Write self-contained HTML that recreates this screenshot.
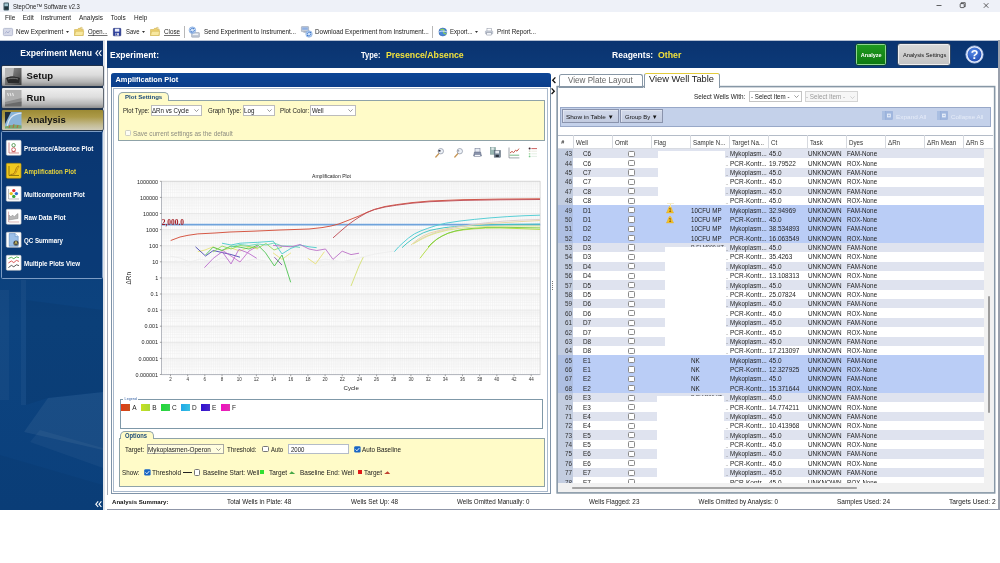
<!DOCTYPE html>
<html><head><meta charset="utf-8"><title>StepOne Software v2.3</title>
<style>
*{box-sizing:border-box;margin:0;padding:0}
html,body{width:1000px;height:563px;overflow:hidden;background:#fff}
body{position:relative;font-family:"Liberation Sans",sans-serif;font-size:6.2px;color:#1a1a1a;line-height:1}
.a,.t{position:absolute;white-space:nowrap}
.t{line-height:1}
svg{position:absolute;overflow:visible}
</style></head><body><div id="app" style="position:absolute;left:0;top:0;width:1000px;height:563px;will-change:transform">
<div class="a" style="left:0px;top:0px;width:1000px;height:11.5px;background:#eef1f8"></div>
<svg style="left:3px;top:1.5px" width="7" height="9" viewBox="0 0 7 9"><rect x="0.5" y="0.5" width="5.5" height="8" rx="1" fill="#3e5a66"/><rect x="1.5" y="1.5" width="3.5" height="2.5" fill="#9fc3cf"/><rect x="1.5" y="5" width="3.5" height="2.5" fill="#22343c"/></svg>
<span class="t" style="left:12.5px;top:4px;font-size:6.9px;transform:scaleX(0.856);transform-origin:0 0;color:#222;">StepOne™ Software v2.3</span>
<svg style="left:930px;top:0" width="70" height="11" viewBox="0 0 70 11"><g stroke="#222" stroke-width="0.7" fill="none"><path d="M6.5 5.5h5"/><rect x="30.2" y="3.6" width="4" height="4" rx="0.8"/><path d="M31.2 3.6v-0.9h4v4h-1"/><path d="M53.8 3.2l4.6 4.6M58.4 3.2l-4.6 4.6"/></g></svg>
<span class="t" style="left:5px;top:15px;font-size:6.45px;">File</span>
<span class="t" style="left:22.7px;top:15px;font-size:6.45px;">Edit</span>
<span class="t" style="left:40.7px;top:15px;font-size:6.45px;">Instrument</span>
<span class="t" style="left:79px;top:15px;font-size:6.45px;">Analysis</span>
<span class="t" style="left:110.7px;top:15px;font-size:6.45px;">Tools</span>
<span class="t" style="left:134px;top:15px;font-size:6.45px;">Help</span>
<span class="t" style="left:16.2px;top:29px;font-size:6.6px;transform:scaleX(0.975);transform-origin:0 0;">New Experiment</span>
<span class="t" style="left:87.5px;top:29px;font-size:6.6px;transform:scaleX(0.901);transform-origin:0 0;text-decoration:underline;text-decoration-thickness:0.5px;text-decoration-color:rgba(0,0,0,0.55);text-underline-offset:0.6px">Open...</span>
<span class="t" style="left:125.5px;top:29px;font-size:6.6px;transform:scaleX(0.897);transform-origin:0 0;">Save</span>
<span class="t" style="left:164px;top:29px;font-size:6.6px;transform:scaleX(0.948);transform-origin:0 0;text-decoration:underline;text-decoration-thickness:0.5px;text-decoration-color:rgba(0,0,0,0.55);text-underline-offset:0.6px">Close</span>
<span class="t" style="left:204px;top:29px;font-size:6.6px;transform:scaleX(0.954);transform-origin:0 0;">Send Experiment to Instrument...</span>
<span class="t" style="left:315px;top:29px;font-size:6.6px;transform:scaleX(0.965);transform-origin:0 0;">Download Experiment from Instrument...</span>
<span class="t" style="left:449.5px;top:29px;font-size:6.6px;transform:scaleX(0.916);transform-origin:0 0;">Export...</span>
<span class="t" style="left:497px;top:29px;font-size:6.6px;transform:scaleX(0.958);transform-origin:0 0;">Print Report...</span>
<svg style="left:65.8px;top:30.6px" width="3" height="2" viewBox="0 0 3 2"><path d="M0 0h3L1.5 2z" fill="#333"/></svg>
<svg style="left:142.2px;top:30.6px" width="3" height="2" viewBox="0 0 3 2"><path d="M0 0h3L1.5 2z" fill="#333"/></svg>
<svg style="left:474.8px;top:30.6px" width="3" height="2" viewBox="0 0 3 2"><path d="M0 0h3L1.5 2z" fill="#333"/></svg>
<div class="a" style="left:183.6px;top:26px;width:0.8px;height:12px;background:#b8b8b8"></div>
<div class="a" style="left:431.6px;top:26px;width:0.8px;height:12px;background:#b8b8b8"></div>
<svg style="left:2.8px;top:28px" width="10" height="8" viewBox="0 0 10 8"><rect x="0.4" y="0.4" width="9.2" height="7.2" rx="1" fill="#d6d9e8" stroke="#a4aac4" stroke-width="0.7"/><path d="M2 5.5l1.5-2 1.5 1.5 2-2.5" stroke="#9aa2c4" stroke-width="0.7" fill="none"/></svg>
<svg style="left:74px;top:26.6px" width="10" height="9" viewBox="0 0 10 9"><path d="M0.5 2.5h3l1-1.2h3v1.2h1.8v6H0.5z" fill="#ecd070" stroke="#c8a840" stroke-width="0.5"/><path d="M0.5 8.5l1.2-4.2h8l-1 4.2z" fill="#f8e8a0" stroke="#c8a840" stroke-width="0.4"/><path d="M6 0.8l2-0.6 0.8 1.6" fill="#f8f0c0" stroke="#c0a040" stroke-width="0.4"/></svg>
<svg style="left:113.4px;top:27.6px" width="8.2" height="8.2" viewBox="0 0 9 9"><rect x="0.4" y="0.4" width="8.2" height="8.2" rx="0.6" fill="#2a3c9c" stroke="#1a2670" stroke-width="0.6"/><rect x="2" y="0.8" width="5" height="3.2" fill="#e8ecf8"/><rect x="2.4" y="5.4" width="4.2" height="3" fill="#c8cce0"/><rect x="3" y="5.9" width="1.2" height="2" fill="#2a3c9c"/></svg>
<svg style="left:150.3px;top:26.6px" width="10" height="9" viewBox="0 0 10 9"><path d="M0.5 2.5h3l1-1.2h3v1.2h1.8v6H0.5z" fill="#ecd070" stroke="#c8a840" stroke-width="0.5"/><path d="M0.5 8.5l1.2-4.2h8l-1 4.2z" fill="#f8e8a0" stroke="#c8a840" stroke-width="0.4"/><path d="M6 0.8l2-0.6 0.8 1.6" fill="#f8f0c0" stroke="#c0a040" stroke-width="0.4"/></svg>
<svg style="left:188.2px;top:25.6px" width="12" height="12" viewBox="0 0 12 12"><rect x="3.6" y="6.6" width="7.8" height="4.6" rx="0.5" fill="#c2cad6" stroke="#8490a4" stroke-width="0.5"/><rect x="4.8" y="7.6" width="5.4" height="1.4" fill="#eef1f6"/><circle cx="4.4" cy="4.2" r="3.3" fill="#d4e4f6" stroke="#6a98d8" stroke-width="0.6"/><path d="M2.4 4.4a2 2 0 0 1 3.4-1.6M6.4 4a2 2 0 0 1-3.4 1.6" stroke="#2f6ac8" stroke-width="0.8" fill="none"/><path d="M5.2 1.8l1.4 0.6-0.9 1.2zM3.6 6.6l-1.4-0.6 0.9-1.2z" fill="#2f6ac8"/></svg>
<svg style="left:301.2px;top:25.6px" width="12" height="12" viewBox="0 0 12 12"><rect x="0.4" y="0.6" width="7.2" height="5" rx="0.4" fill="#c6ced9" stroke="#8490a4" stroke-width="0.5"/><rect x="1.2" y="1.4" width="5.6" height="2.4" fill="#8fb0e4"/><rect x="2.4" y="5.6" width="3.4" height="1" fill="#9aa4b4"/><circle cx="8" cy="8" r="3.2" fill="#cfe2f7" stroke="#6a98d8" stroke-width="0.6"/><path d="M6.2 8.2a1.9 1.9 0 0 1 3.2-1.5M9.8 7.8a1.9 1.9 0 0 1-3.2 1.5" stroke="#2f6ac8" stroke-width="0.8" fill="none"/><path d="M8.8 5.7l1.4 0.6-0.9 1.2zM7.2 10.3l-1.4-0.6 0.9-1.2z" fill="#2f6ac8"/></svg>
<svg style="left:436.5px;top:26.5px" width="11" height="10" viewBox="0 0 11 10"><circle cx="5.8" cy="5" r="4" fill="#4a88d8" stroke="#2a5aa0" stroke-width="0.5"/><path d="M3.4 3.2c1-1.2 3-1.2 3.6 0s-1 1.4-0.4 2.6 2 0.4 2.6 1.4" fill="none" stroke="#8ad060" stroke-width="1.2"/><path d="M0.4 6.2c2-2.2 6-2.8 9.6-1.2" stroke="#f0f4fa" stroke-width="0.9" fill="none"/></svg>
<svg style="left:484.6px;top:27.8px" width="8.2" height="7.4" viewBox="0 0 10 9"><rect x="2.4" y="0.4" width="5.2" height="3.4" fill="#fff" stroke="#70788c" stroke-width="0.5"/><rect x="0.5" y="3.6" width="9" height="3.6" rx="0.6" fill="#ccd2dc" stroke="#8a92a4" stroke-width="0.5"/><rect x="2.2" y="5.8" width="5.6" height="2.8" fill="#f4f6fa" stroke="#70788c" stroke-width="0.5"/></svg>
<div class="a" style="left:0px;top:40px;width:103.2px;height:1px;background:#b4bfd2"></div>
<div class="a" style="left:0px;top:41px;width:103.2px;height:468.5px;background:linear-gradient(#0a2f68 0,#0b3b76 25%,#0c437f 60%,#0b407c 100%)"></div>
<svg style="left:0;top:280px" width="103" height="230" viewBox="0 0 103 230"><path d="M48 118L103 112V170L24 152z" fill="#fff" opacity="0.06"/><path d="M40 150L103 168V188L30 162z" fill="#fff" opacity="0.04"/><path d="M0 10h9v110h-9z" fill="#fff" opacity="0.035"/><path d="M21 0h5v125h-5z" fill="#fff" opacity="0.04"/><path d="M26 20L103 30V112L48 118 26 125z" fill="#000" opacity="0.05"/><path d="M0 175L103 205v25H0z" fill="#000" opacity="0.04"/></svg>
<div class="a" style="left:103.2px;top:40px;width:1.4px;height:469.5px;background:#dfe3ea"></div>
<span class="t" style="left:20.3px;top:49px;font-size:8.6px;font-weight:bold;color:#fff;">Experiment Menu</span>
<svg style="left:94.5px;top:50px" width="7" height="6.4" viewBox="0 0 7 6.4"><path d="M3.2 0.4L0.8 3.2l2.4 2.8M6.4 0.4L4 3.2l2.4 2.8" stroke="#fff" stroke-width="1.1" fill="none"/></svg>
<svg style="left:94.6px;top:500.8px" width="7" height="6.4" viewBox="0 0 7 6.4"><path d="M3.2 0.4L0.8 3.2l2.4 2.8M6.4 0.4L4 3.2l2.4 2.8" stroke="#fff" stroke-width="1.1" fill="none"/></svg>
<div class="a" style="left:1.6px;top:65.6px;width:101px;height:20.9px;background:linear-gradient(#eeeeee 0,#dcdcdc 45%,#b4b4b4 80%,#8c8c8c 100%);border-radius:1px;box-shadow:0 0 0 0.7px #2c3440"></div>
<svg style="left:5px;top:67.5px" width="16.5" height="17" viewBox="0 0 16.5 17"><defs><linearGradient id="g1" x1="0" y1="0" x2="1" y2="1"><stop offset="0" stop-color="#9a9a9a"/><stop offset="1" stop-color="#3c3c3c"/></linearGradient></defs><rect width="16.5" height="17" fill="url(#g1)"/><path d="M0 0h9l-1 8-8 2z" fill="#b4b4b4"/><path d="M1 10c3-2 9-2 14 0l-1 5H3z" fill="#2a2a2a"/><path d="M3 11c3-1 7-1 10 0" stroke="#8a8a8a" stroke-width="0.8" fill="none"/></svg>
<span class="t" style="left:26.6px;top:71px;font-size:9.5px;font-weight:bold;color:#111;">Setup</span>
<div class="a" style="left:1.6px;top:88px;width:101px;height:20.4px;background:linear-gradient(#efefef 0,#dedede 45%,#b6b6b6 80%,#8e8e8e 100%);border-radius:1px;box-shadow:0 0 0 0.7px #2c3440"></div>
<svg style="left:5px;top:90px" width="16.5" height="16.5" viewBox="0 0 16.5 16.5"><rect width="16.5" height="16.5" fill="#b0b0b0"/><path d="M0 12l16.5-4v8.5H0z" fill="#8c8c8c"/><path d="M0 14.5l16.5-3v5H0z" fill="#6a6a6a"/><path d="M2.5 3l1 3M5 3l1 3M7.5 3l1 3" stroke="#e4e4e4" stroke-width="1.1"/></svg>
<span class="t" style="left:26.6px;top:93px;font-size:9.5px;font-weight:bold;color:#111;">Run</span>
<div class="a" style="left:1.6px;top:109.6px;width:101px;height:20px;background:linear-gradient(#9c8a34 0,#ac9a48 35%,#c4bc94 75%,#d0ccb8 100%);border-radius:1px;box-shadow:0 0 0 0.7px #2c3440"></div>
<svg style="left:5px;top:111.5px" width="16.5" height="16.5" viewBox="0 0 16.5 16.5"><rect width="16.5" height="16.5" fill="#8ab4d8"/><path d="M0 0h6L0 12z" fill="#1e2c3c"/><path d="M2 16.5C3 8 6 2 16.5 1.2" stroke="#dfe8f4" stroke-width="1.2" fill="none"/><path d="M0 16.5h16.5v-3c-4-1-9-1-16.5 1z" fill="#7aa868"/><path d="M4 16l1-3M8 16l1-4M12 16l1-3" stroke="#c05a3a" stroke-width="0.8"/></svg>
<span class="t" style="left:26.6px;top:115px;font-size:9.5px;font-weight:bold;color:#111;">Analysis</span>
<div class="a" style="left:1.4px;top:131.4px;width:101.2px;height:147.8px;border:0.9px solid #7d9cc4;border-radius:1.5px;background:rgba(10,50,110,0.35)"></div>
<svg style="left:6px;top:139.7px" width="15.4" height="15.6" viewBox="0 0 15.4 15.6"><rect x="0.3" y="0.3" width="14.8" height="15" rx="1.1" fill="#fff" stroke="#c8c8c8" stroke-width="0.6"/><path d="M3 2.5v10.5h10" stroke="#c06060" stroke-width="0.7" fill="none"/><circle cx="7.6" cy="5.2" r="1.7" fill="none" stroke="#3a8a3a" stroke-width="0.8"/><circle cx="7.6" cy="9.6" r="1.9" fill="none" stroke="#c04040" stroke-width="0.8"/><path d="M5.6 11.8h4" stroke="#c04040" stroke-width="0.7"/></svg>
<span class="t" style="left:23.8px;top:146px;font-size:6.6px;transform:scaleX(0.952);transform-origin:0 0;font-weight:bold;color:#fff;">Presence/Absence Plot</span>
<svg style="left:6px;top:162.7px" width="15.4" height="15.6" viewBox="0 0 15.4 15.6"><rect x="0.3" y="0.3" width="14.8" height="15" rx="1.1" fill="#f0c820" stroke="#a88810" stroke-width="0.6"/><path d="M3 3v9.5h10" stroke="#7a6408" stroke-width="0.8" fill="none"/><path d="M4.5 11.5c3 0 4-1 5-4s1.5-4 3.5-4.5" stroke="#a06c10" stroke-width="0.9" fill="none"/><path d="M6.5 11.5c3 0 3.5-1.5 4.5-4s1-3 2.5-3.6" stroke="#c89018" stroke-width="0.9" fill="none"/></svg>
<span class="t" style="left:23.8px;top:169px;font-size:6.6px;transform:scaleX(0.929);transform-origin:0 0;font-weight:bold;color:#e6d23c;">Amplification Plot</span>
<svg style="left:6px;top:185.7px" width="15.4" height="15.6" viewBox="0 0 15.4 15.6"><rect x="0.3" y="0.3" width="14.8" height="15" rx="1.1" fill="#fff" stroke="#c8c8c8" stroke-width="0.6"/><path d="M2.6 3v10h10.5" stroke="#8a8a8a" stroke-width="0.6" fill="none"/><circle cx="7.8" cy="4.6" r="1.7" fill="#e03030"/><circle cx="5.2" cy="7.6" r="1.7" fill="#e8c020"/><circle cx="10.4" cy="7.6" r="1.7" fill="#3070d0"/><circle cx="7.8" cy="10.4" r="1.7" fill="#38a838"/></svg>
<span class="t" style="left:23.8px;top:192px;font-size:6.6px;transform:scaleX(0.933);transform-origin:0 0;font-weight:bold;color:#fff;">Multicomponent Plot</span>
<svg style="left:6px;top:208.7px" width="15.4" height="15.6" viewBox="0 0 15.4 15.6"><rect x="0.3" y="0.3" width="14.8" height="15" rx="1.1" fill="#fff" stroke="#c8c8c8" stroke-width="0.6"/><path d="M2.6 2.6v10.4h10.6" stroke="#c08080" stroke-width="0.6" fill="none"/><path d="M3 6l2 2 1.5-2 2 2 1.5-2 2-1.5v5L3 11z" fill="#b8b8b8" stroke="#8a8a8a" stroke-width="0.5"/></svg>
<span class="t" style="left:23.8px;top:215px;font-size:6.6px;transform:scaleX(0.945);transform-origin:0 0;font-weight:bold;color:#fff;">Raw Data Plot</span>
<svg style="left:6px;top:231.7px" width="15.4" height="15.6" viewBox="0 0 15.4 15.6"><rect x="0.3" y="0.3" width="14.8" height="15" rx="1.1" fill="#fff" stroke="#c8c8c8" stroke-width="0.6"/><path d="M3.2 1.6h6l3 3v9.6h-9z" fill="#9cc0e8" stroke="#5a88c0" stroke-width="0.6"/><path d="M9.2 1.6v3h3" fill="#d8e8f8" stroke="#5a88c0" stroke-width="0.5"/><circle cx="10" cy="11" r="2.6" fill="#484848"/><path d="M8.8 12.4l1.2-3 1.2 3" stroke="#f0e060" stroke-width="0.7" fill="none"/></svg>
<span class="t" style="left:23.8px;top:238px;font-size:6.6px;transform:scaleX(0.933);transform-origin:0 0;font-weight:bold;color:#fff;">QC Summary</span>
<svg style="left:6px;top:254.7px" width="15.4" height="15.6" viewBox="0 0 15.4 15.6"><rect x="0.3" y="0.3" width="14.8" height="15" rx="1.1" fill="#fff" stroke="#c8c8c8" stroke-width="0.6"/><path d="M2.4 3.5l3-1.2 2.4 1.4 2.6-1.8 2.6 0.8" stroke="#30a030" stroke-width="0.8" fill="none"/><path d="M2.4 8l3-2 2.4 1.6 2.6-2.2 2.6 1" stroke="#d03030" stroke-width="0.8" fill="none"/><path d="M2.4 12.6l3-2.2 2.4 1.4 2.6-2 2.6 0.8" stroke="#303030" stroke-width="0.8" fill="none"/></svg>
<span class="t" style="left:23.8px;top:261px;font-size:6.6px;transform:scaleX(0.940);transform-origin:0 0;font-weight:bold;color:#fff;">Multiple Plots View</span>
<div class="a" style="left:107px;top:40px;width:891.3px;height:1px;background:#b4bfd2"></div>
<div class="a" style="left:107px;top:41px;width:891.3px;height:27.2px;background:linear-gradient(#0a3370,#0c3a78)"></div>
<div class="a" style="left:998.3px;top:40px;width:1.7px;height:470px;background:#9aa0ac"></div>
<span class="t" style="left:110px;top:51px;font-size:9.2px;transform:scaleX(0.922);transform-origin:0 0;font-weight:bold;color:#fff;">Experiment:</span>
<span class="t" style="left:361.3px;top:51px;font-size:9px;transform:scaleX(0.836);transform-origin:0 0;font-weight:bold;color:#fff;">Type:</span>
<span class="t" style="left:386.3px;top:51px;font-size:9px;transform:scaleX(0.971);transform-origin:0 0;font-weight:bold;color:#f2e23c;">Presence/Absence</span>
<span class="t" style="left:611.8px;top:51px;font-size:9px;transform:scaleX(0.947);transform-origin:0 0;font-weight:bold;color:#fff;">Reagents:</span>
<span class="t" style="left:657.5px;top:51px;font-size:9px;transform:scaleX(0.971);transform-origin:0 0;font-weight:bold;color:#f2e23c;">Other</span>
<div class="a" style="left:855.5px;top:43.8px;width:30.3px;height:21.2px;background:linear-gradient(#1f9a1f,#0f7a12);border:1px solid #8fd68f;border-radius:1.5px;box-shadow:0 0 0 0.5px #0a4a0a"></div>
<span class="t" style="left:860.8px;top:53px;font-size:5.5px;font-weight:bold;color:#fff;">Analyze</span>
<div class="a" style="left:897.5px;top:43.8px;width:52.5px;height:21.2px;background:linear-gradient(#d8d8d8,#c4c4c4);border:1px solid #efefef;border-radius:1.5px;box-shadow:0 0 0 0.5px #555"></div>
<span class="t" style="left:902.5px;top:53px;font-size:5.7px;transform:scaleX(0.998);transform-origin:0 0;color:#111;">Analysis Settings</span>
<svg style="left:965px;top:45px" width="19" height="19" viewBox="0 0 19 19"><defs><radialGradient id="hg" cx="0.4" cy="0.3" r="0.8"><stop offset="0" stop-color="#5a8ce8"/><stop offset="1" stop-color="#1c48b0"/></radialGradient></defs><circle cx="9.5" cy="9.5" r="8.6" fill="#e8eefc" stroke="#b8c8ec" stroke-width="0.8"/><circle cx="9.5" cy="9.5" r="6.9" fill="url(#hg)"/><text x="9.5" y="14" text-anchor="middle" font-family="Liberation Sans,sans-serif" font-weight="bold" font-size="12.5" fill="#fff">?</text></svg>
<div class="a" style="left:110.6px;top:73px;width:440.2px;height:420.6px;border:1.4px solid #7f93a8;border-top:none;border-radius:3px 3px 0 0;background:#fff"></div>
<div class="a" style="left:106.6px;top:68.2px;width:1px;height:441.8px;background:#a4aab6"></div>
<div class="a" style="left:110.6px;top:73px;width:440.2px;height:13.9px;background:linear-gradient(#0d4696,#0a3d8a);border-radius:3px 3px 0 0"></div>
<div class="a" style="left:113.2px;top:87.5px;width:435.2px;height:404.1px;border:0.7px solid #a9b9cc"></div>
<span class="t" style="left:115.5px;top:76px;font-size:7.4px;font-weight:bold;color:#fff;">Amplification Plot</span>
<div class="a" style="left:118px;top:100.4px;width:426.6px;height:40.2px;background:#fffbc8;border:0.8px solid #8fa3a8"></div>
<div class="a" style="left:118px;top:92px;width:50.6px;height:9.4px;background:#fffbc8;border:0.8px solid #8fa3a8;border-bottom:none;border-radius:5px 5px 0 0"></div>
<div class="a" style="left:118.8px;top:100px;width:49px;height:2px;background:#fffbc8"></div>
<span class="t" style="left:125px;top:94px;font-size:6.1px;font-weight:bold;color:#1c4a78;">Plot Settings</span>
<span class="t" style="left:123px;top:108px;font-size:6.35px;transform:scaleX(0.942);transform-origin:0 0;">Plot Type:</span>
<div class="a" style="left:151px;top:105.2px;width:51.4px;height:10.6px;background:#fff;border:0.6px solid #bcbcbc"></div>
<span class="t" style="left:152.4px;top:108px;font-size:6.35px;transform:scaleX(0.968);transform-origin:0 0;">ΔRn vs Cycle</span>
<svg style="left:194.4px;top:109.3px" width="5" height="3" viewBox="0 0 5 3"><path d="M0.4 0.4l2.1 2.1 2.1-2.1" stroke="#5a5a5a" stroke-width="0.6" fill="none"/></svg>
<span class="t" style="left:207.5px;top:108px;font-size:6.35px;transform:scaleX(0.956);transform-origin:0 0;">Graph Type:</span>
<div class="a" style="left:242.6px;top:105.2px;width:32px;height:10.6px;background:#fff;border:0.6px solid #bcbcbc"></div>
<span class="t" style="left:244.2px;top:108px;font-size:6.35px;transform:scaleX(0.982);transform-origin:0 0;">Log</span>
<svg style="left:266.6px;top:109.3px" width="5" height="3" viewBox="0 0 5 3"><path d="M0.4 0.4l2.1 2.1 2.1-2.1" stroke="#5a5a5a" stroke-width="0.6" fill="none"/></svg>
<span class="t" style="left:279.8px;top:108px;font-size:6.35px;transform:scaleX(0.985);transform-origin:0 0;">Plot Color:</span>
<div class="a" style="left:310.2px;top:105.2px;width:45.6px;height:10.6px;background:#fff;border:0.6px solid #bcbcbc"></div>
<span class="t" style="left:312px;top:108px;font-size:6.35px;transform:scaleX(0.956);transform-origin:0 0;">Well</span>
<svg style="left:347.8px;top:109.3px" width="5" height="3" viewBox="0 0 5 3"><path d="M0.4 0.4l2.1 2.1 2.1-2.1" stroke="#5a5a5a" stroke-width="0.6" fill="none"/></svg>
<div class="a" style="left:124.6px;top:130.3px;width:6.2px;height:6.2px;background:#fdfdf4;border:0.6px solid #cfcfc4;border-radius:1.2px"></div>
<span class="t" style="left:132.9px;top:131px;font-size:6.3px;transform:scaleX(1.011);transform-origin:0 0;color:#8c8c80;">Save current settings as the default</span>
<svg style="left:0;top:0" width="1000" height="563" viewBox="0 0 1000 563"><rect x="161.5" y="181.3" width="378.7" height="193.3" fill="#fdfdfd"/><path d="M161.9 181.3V374.6M164.05 181.3V374.6M166.19 181.3V374.6M168.34 181.3V374.6M170.49 181.3V374.6M172.63 181.3V374.6M174.78 181.3V374.6M176.93 181.3V374.6M179.08 181.3V374.6M181.22 181.3V374.6M183.37 181.3V374.6M185.52 181.3V374.6M187.66 181.3V374.6M189.81 181.3V374.6M191.96 181.3V374.6M194.11 181.3V374.6M196.25 181.3V374.6M198.4 181.3V374.6M200.55 181.3V374.6M202.69 181.3V374.6M204.84 181.3V374.6M206.99 181.3V374.6M209.13 181.3V374.6M211.28 181.3V374.6M213.43 181.3V374.6M215.57 181.3V374.6M217.72 181.3V374.6M219.87 181.3V374.6M222.02 181.3V374.6M224.16 181.3V374.6M226.31 181.3V374.6M228.46 181.3V374.6M230.6 181.3V374.6M232.75 181.3V374.6M234.9 181.3V374.6M237.05 181.3V374.6M239.19 181.3V374.6M241.34 181.3V374.6M243.49 181.3V374.6M245.63 181.3V374.6M247.78 181.3V374.6M249.93 181.3V374.6M252.07 181.3V374.6M254.22 181.3V374.6M256.37 181.3V374.6M258.51 181.3V374.6M260.66 181.3V374.6M262.81 181.3V374.6M264.96 181.3V374.6M267.1 181.3V374.6M269.25 181.3V374.6M271.4 181.3V374.6M273.54 181.3V374.6M275.69 181.3V374.6M277.84 181.3V374.6M279.99 181.3V374.6M282.13 181.3V374.6M284.28 181.3V374.6M286.43 181.3V374.6M288.57 181.3V374.6M290.72 181.3V374.6M292.87 181.3V374.6M295.01 181.3V374.6M297.16 181.3V374.6M299.31 181.3V374.6M301.45 181.3V374.6M303.6 181.3V374.6M305.75 181.3V374.6M307.9 181.3V374.6M310.04 181.3V374.6M312.19 181.3V374.6M314.34 181.3V374.6M316.48 181.3V374.6M318.63 181.3V374.6M320.78 181.3V374.6M322.92 181.3V374.6M325.07 181.3V374.6M327.22 181.3V374.6M329.37 181.3V374.6M331.51 181.3V374.6M333.66 181.3V374.6M335.81 181.3V374.6M337.95 181.3V374.6M340.1 181.3V374.6M342.25 181.3V374.6M344.39 181.3V374.6M346.54 181.3V374.6M348.69 181.3V374.6M350.84 181.3V374.6M352.98 181.3V374.6M355.13 181.3V374.6M357.28 181.3V374.6M359.42 181.3V374.6M361.57 181.3V374.6M363.72 181.3V374.6M365.87 181.3V374.6M368.01 181.3V374.6M370.16 181.3V374.6M372.31 181.3V374.6M374.45 181.3V374.6M376.6 181.3V374.6M378.75 181.3V374.6M380.89 181.3V374.6M383.04 181.3V374.6M385.19 181.3V374.6M387.33 181.3V374.6M389.48 181.3V374.6M391.63 181.3V374.6M393.78 181.3V374.6M395.92 181.3V374.6M398.07 181.3V374.6M400.22 181.3V374.6M402.36 181.3V374.6M404.51 181.3V374.6M406.66 181.3V374.6M408.8 181.3V374.6M410.95 181.3V374.6M413.1 181.3V374.6M415.25 181.3V374.6M417.39 181.3V374.6M419.54 181.3V374.6M421.69 181.3V374.6M423.83 181.3V374.6M425.98 181.3V374.6M428.13 181.3V374.6M430.27 181.3V374.6M432.42 181.3V374.6M434.57 181.3V374.6M436.72 181.3V374.6M438.86 181.3V374.6M441.01 181.3V374.6M443.16 181.3V374.6M445.3 181.3V374.6M447.45 181.3V374.6M449.6 181.3V374.6M451.75 181.3V374.6M453.89 181.3V374.6M456.04 181.3V374.6M458.19 181.3V374.6M460.33 181.3V374.6M462.48 181.3V374.6M464.63 181.3V374.6M466.77 181.3V374.6M468.92 181.3V374.6M471.07 181.3V374.6M473.22 181.3V374.6M475.36 181.3V374.6M477.51 181.3V374.6M479.66 181.3V374.6M481.8 181.3V374.6M483.95 181.3V374.6M486.1 181.3V374.6M488.24 181.3V374.6M490.39 181.3V374.6M492.54 181.3V374.6M494.68 181.3V374.6M496.83 181.3V374.6M498.98 181.3V374.6M501.13 181.3V374.6M503.27 181.3V374.6M505.42 181.3V374.6M507.57 181.3V374.6M509.71 181.3V374.6M511.86 181.3V374.6M514.01 181.3V374.6M516.15 181.3V374.6M518.3 181.3V374.6M520.45 181.3V374.6M522.6 181.3V374.6M524.74 181.3V374.6M526.89 181.3V374.6M529.04 181.3V374.6M531.18 181.3V374.6M533.33 181.3V374.6M535.48 181.3V374.6M537.62 181.3V374.6M539.77 181.3V374.6" stroke="#eaeaea" stroke-width="0.45" fill="none"/><path d="M161.5 374.5H540.2M161.5 369.65H540.2M161.5 366.82H540.2M161.5 364.81H540.2M161.5 363.25H540.2M161.5 361.97H540.2M161.5 360.89H540.2M161.5 359.96H540.2M161.5 359.14H540.2M161.5 358.4H540.2M161.5 353.55H540.2M161.5 350.72H540.2M161.5 348.71H540.2M161.5 347.15H540.2M161.5 345.87H540.2M161.5 344.79H540.2M161.5 343.86H540.2M161.5 343.04H540.2M161.5 342.3H540.2M161.5 337.45H540.2M161.5 334.62H540.2M161.5 332.61H540.2M161.5 331.05H540.2M161.5 329.77H540.2M161.5 328.69H540.2M161.5 327.76H540.2M161.5 326.94H540.2M161.5 326.2H540.2M161.5 321.35H540.2M161.5 318.52H540.2M161.5 316.51H540.2M161.5 314.95H540.2M161.5 313.67H540.2M161.5 312.59H540.2M161.5 311.66H540.2M161.5 310.84H540.2M161.5 310.1H540.2M161.5 305.25H540.2M161.5 302.42H540.2M161.5 300.41H540.2M161.5 298.85H540.2M161.5 297.57H540.2M161.5 296.49H540.2M161.5 295.56H540.2M161.5 294.74H540.2M161.5 294H540.2M161.5 289.15H540.2M161.5 286.32H540.2M161.5 284.31H540.2M161.5 282.75H540.2M161.5 281.47H540.2M161.5 280.39H540.2M161.5 279.46H540.2M161.5 278.64H540.2M161.5 277.9H540.2M161.5 273.05H540.2M161.5 270.22H540.2M161.5 268.21H540.2M161.5 266.65H540.2M161.5 265.37H540.2M161.5 264.29H540.2M161.5 263.36H540.2M161.5 262.54H540.2M161.5 261.8H540.2M161.5 256.95H540.2M161.5 254.12H540.2M161.5 252.11H540.2M161.5 250.55H540.2M161.5 249.27H540.2M161.5 248.19H540.2M161.5 247.26H540.2M161.5 246.44H540.2M161.5 245.7H540.2M161.5 240.85H540.2M161.5 238.02H540.2M161.5 236.01H540.2M161.5 234.45H540.2M161.5 233.17H540.2M161.5 232.09H540.2M161.5 231.16H540.2M161.5 230.34H540.2M161.5 229.6H540.2M161.5 224.75H540.2M161.5 221.92H540.2M161.5 219.91H540.2M161.5 218.35H540.2M161.5 217.07H540.2M161.5 215.99H540.2M161.5 215.06H540.2M161.5 214.24H540.2M161.5 213.5H540.2M161.5 208.65H540.2M161.5 205.82H540.2M161.5 203.81H540.2M161.5 202.25H540.2M161.5 200.97H540.2M161.5 199.89H540.2M161.5 198.96H540.2M161.5 198.14H540.2M161.5 197.4H540.2M161.5 192.55H540.2M161.5 189.72H540.2M161.5 187.71H540.2M161.5 186.15H540.2M161.5 184.87H540.2M161.5 183.79H540.2M161.5 182.86H540.2M161.5 182.04H540.2" stroke="#eeeeee" stroke-width="0.45" fill="none"/><path d="M161.5 374.5H540.2M161.5 358.4H540.2M161.5 342.3H540.2M161.5 326.2H540.2M161.5 310.1H540.2M161.5 294H540.2M161.5 277.9H540.2M161.5 261.8H540.2M161.5 245.7H540.2M161.5 229.6H540.2M161.5 213.5H540.2M161.5 197.4H540.2M161.5 181.3H540.2" stroke="#dedede" stroke-width="0.5" fill="none"/><path d="M161.5 181.3V374.6H540.2" stroke="#9a9ea8" stroke-width="0.7" fill="none"/><path d="M161.5 181.3H540.2V374.6" stroke="#c8c8c8" stroke-width="0.6" fill="none"/><path d="M170.49 374.6v1.6M187.66 374.6v1.6M204.84 374.6v1.6M222.02 374.6v1.6M239.19 374.6v1.6M256.37 374.6v1.6M273.54 374.6v1.6M290.72 374.6v1.6M307.9 374.6v1.6M325.07 374.6v1.6M342.25 374.6v1.6M359.42 374.6v1.6M376.6 374.6v1.6M393.78 374.6v1.6M410.95 374.6v1.6M428.13 374.6v1.6M445.3 374.6v1.6M462.48 374.6v1.6M479.66 374.6v1.6M496.83 374.6v1.6M514.01 374.6v1.6M531.18 374.6v1.6M161.5 374.5h-1.6M161.5 358.4h-1.6M161.5 342.3h-1.6M161.5 326.2h-1.6M161.5 310.1h-1.6M161.5 294h-1.6M161.5 277.9h-1.6M161.5 261.8h-1.6M161.5 245.7h-1.6M161.5 229.6h-1.6M161.5 213.5h-1.6M161.5 197.4h-1.6M161.5 181.3h-1.6" stroke="#666" stroke-width="0.6" fill="none"/><polyline points="170,256 180,258 190,262 200,259 213,262 222,258 240,262 256,259 273,263 290,261 309,263 325,259 342,262 359,258 375,254 394,251" stroke="#ececec" stroke-width="0.8" fill="none" stroke-linejoin="round" opacity="1"/><polyline points="175,260 187,266 196,261 210,268 230,262 248,266 265,261 285,266 300,262 320,266 340,262 360,259" stroke="#f0f0f0" stroke-width="0.8" fill="none" stroke-linejoin="round" opacity="1"/><path d="M161.5 224.6H540.2" stroke="#6fa3dc" stroke-width="1.7"/><polyline points="197.8,251.7 205,250 213,246.8 222,250.5 231,248 240,251 249,247 258,249" stroke="#e4e06a" stroke-width="0.8" fill="none" stroke-linejoin="round" opacity="1"/><polyline points="273,252.8 282,259.4 291,252.8" stroke="#e8e070" stroke-width="0.8" fill="none" stroke-linejoin="round" opacity="1"/><polyline points="307.8,258.3 315.6,263.9 324.4,251.7" stroke="#e6de68" stroke-width="0.8" fill="none" stroke-linejoin="round" opacity="1"/><polyline points="195.5,246.8 205.5,256 213.3,250.5 223.3,252.8 231,254.5 240,257.2" stroke="#3434a8" stroke-width="0.8" fill="none" stroke-linejoin="round" opacity="1"/><polyline points="204.4,267.7 213.3,258.3 222.2,251.7 231,263.9 238.9,249.4 247.8,252.8 256.7,258.3" stroke="#b45cc8" stroke-width="0.8" fill="none" stroke-linejoin="round" opacity="1"/><polyline points="222,250 231,256 240,262 249,251 258,246" stroke="#c060c8" stroke-width="0.8" fill="none" stroke-linejoin="round" opacity="1"/><polyline points="274.4,257.2 282,265" stroke="#7038a0" stroke-width="0.8" fill="none" stroke-linejoin="round" opacity="1"/><polyline points="205.5,255 213,247.2 222,250.5 231,246 240,247.2 249,249 257.8,245 265.5,252.8 274.4,266 282,255 290.7,282.3" stroke="#44c048" stroke-width="0.85" fill="none" stroke-linejoin="round" opacity="1"/><polyline points="213,252 222,246 231,249 240,245.5 249,246.5 258,248 266,243.5 274,250 282,247" stroke="#8cd848" stroke-width="0.8" fill="none" stroke-linejoin="round" opacity="1"/><polyline points="222,243.2 231,245 240,243.2 257.8,242.3 273.3,241.2 282,253.9 291,248.3 300,245 309,246.8 316.7,247.7" stroke="#40c8c8" stroke-width="0.85" fill="none" stroke-linejoin="round" opacity="1"/><polyline points="231,247 240,244.5 249,245.5 258,244 266,245 274,243 282,246 291,246 300,247.5" stroke="#58d0b0" stroke-width="0.8" fill="none" stroke-linejoin="round" opacity="1"/><polyline points="273,245.4 291,246.8 300,244.5 309,249 316.7,250.5 325.5,249 333,259.4 342.2,251.2 351,254.6 359,253.2" stroke="#b868c4" stroke-width="0.85" fill="none" stroke-linejoin="round" opacity="1"/><polyline points="351,286 355,276 359,266 363.3,257.2" stroke="#d4e070" stroke-width="0.9" fill="none" stroke-linejoin="round" opacity="1"/><polyline points="170.7,240.5 180,237 188,235.3 197.8,233.9 215,233 230,232 253,231.2 280,230 309,229 322,227.6 331,226 339,223.9 349,220 359,216 367,212.3 374.4,209.4 385,206.5 396.7,204.6 412,202.6 430,201 463,199.7 500,199.1 540,198.8" stroke="#d4503c" stroke-width="0.95" fill="none" stroke-linejoin="round" opacity="1"/><polyline points="333,237.9 340,231.7 347.8,225 354,220.5 359,217.2 367,212.6 374.4,209.6 385,207 396.7,205.2 412,203.2 430,201.7 463,200.4 500,199.8 540,199.5" stroke="#c05058" stroke-width="0.95" fill="none" stroke-linejoin="round" opacity="1"/><polyline points="394.4,251.7 398.5,247 403,242.8 408.5,238 414.4,233.9 421,230.8 427.8,228.3 436,225.6 445.6,223.2 460,221 474.4,219.4 490,217.9 507.8,216.6 525,215.7 540,215.2" stroke="#50ccd4" stroke-width="0.95" fill="none" stroke-linejoin="round" opacity="1"/><polyline points="402,247.7 407,243.2 412,239.4 417.5,235.8 423.3,232.8 430,230.4 436.7,229 445,227.6 454.4,226.6 470,225.6 485.6,225 510,224.4 540,224.1" stroke="#40c4c0" stroke-width="0.95" fill="none" stroke-linejoin="round" opacity="1"/><polyline points="411,245 417,240 423,236 430,233 436.7,231.2 445,229 454.4,227.2 470,225.3 485.6,223.9 503,222.7 519,221.7 540,220.5" stroke="#ead6a0" stroke-width="0.95" fill="none" stroke-linejoin="round" opacity="1"/><polyline points="414,243 423,237.5 436.7,232 454.4,227.8 470,224.9 485.6,222.8 503,221.2 519,220.2 540,219.4" stroke="#dccccc" stroke-width="0.9" fill="none" stroke-linejoin="round" opacity="1"/><polyline points="420,258.3 424,253 427.8,248.3 432,243.5 436.7,239.4 442,236 447.8,233.4 455,231.3 463.3,229.9 474,228.8 485.6,228.1 500,228 520,228.6 540,229.4" stroke="#b4dc44" stroke-width="0.95" fill="none" stroke-linejoin="round" opacity="1"/><polyline points="428,247 432,243 437,239 442.5,235.8 448.5,233 456,230.8 464,229.3 475,228.1 487,227.4 505,227.3 540,227.9" stroke="#7ccc44" stroke-width="0.95" fill="none" stroke-linejoin="round" opacity="1"/><polyline points="413,244 420,240 428,236 437,232.8 447,230.3 458,228.5 470,227.3 490,226.4 515,226 540,226" stroke="#dce47c" stroke-width="0.85" fill="none" stroke-linejoin="round" opacity="1"/></svg>
<span class="t" style="left:311.5px;top:174px;font-size:5.2px;transform:scaleX(0.978);transform-origin:0 0;color:#222;">Amplification Plot</span>
<span class="t" style="left:136.98px;top:180px;font-size:5.45px;color:#222;">1000000</span>
<span class="t" style="left:140.01px;top:196px;font-size:5.45px;color:#222;">100000</span>
<span class="t" style="left:143.04px;top:212px;font-size:5.45px;color:#222;">10000</span>
<span class="t" style="left:146.08px;top:228px;font-size:5.45px;color:#222;">1000</span>
<span class="t" style="left:149.11px;top:244px;font-size:5.45px;color:#222;">100</span>
<span class="t" style="left:152.14px;top:260px;font-size:5.45px;color:#222;">10</span>
<span class="t" style="left:155.17px;top:276px;font-size:5.45px;color:#222;">1</span>
<span class="t" style="left:150.62px;top:292px;font-size:5.45px;color:#222;">0.1</span>
<span class="t" style="left:147.59px;top:308px;font-size:5.45px;color:#222;">0.01</span>
<span class="t" style="left:144.56px;top:324px;font-size:5.45px;color:#222;">0.001</span>
<span class="t" style="left:141.53px;top:340px;font-size:5.45px;color:#222;">0.0001</span>
<span class="t" style="left:138.5px;top:357px;font-size:5.45px;color:#222;">0.00001</span>
<span class="t" style="left:135.47px;top:373px;font-size:5.45px;color:#222;">0.000001</span>
<span class="t" style="left:169.24px;top:378px;font-size:4.5px;color:#333;">2</span>
<span class="t" style="left:186.41px;top:378px;font-size:4.5px;color:#333;">4</span>
<span class="t" style="left:203.59px;top:378px;font-size:4.5px;color:#333;">6</span>
<span class="t" style="left:220.76px;top:378px;font-size:4.5px;color:#333;">8</span>
<span class="t" style="left:236.69px;top:378px;font-size:4.5px;color:#333;">10</span>
<span class="t" style="left:253.87px;top:378px;font-size:4.5px;color:#333;">12</span>
<span class="t" style="left:271.04px;top:378px;font-size:4.5px;color:#333;">14</span>
<span class="t" style="left:288.22px;top:378px;font-size:4.5px;color:#333;">16</span>
<span class="t" style="left:305.39px;top:378px;font-size:4.5px;color:#333;">18</span>
<span class="t" style="left:322.57px;top:378px;font-size:4.5px;color:#333;">20</span>
<span class="t" style="left:339.75px;top:378px;font-size:4.5px;color:#333;">22</span>
<span class="t" style="left:356.92px;top:378px;font-size:4.5px;color:#333;">24</span>
<span class="t" style="left:374.1px;top:378px;font-size:4.5px;color:#333;">26</span>
<span class="t" style="left:391.27px;top:378px;font-size:4.5px;color:#333;">28</span>
<span class="t" style="left:408.45px;top:378px;font-size:4.5px;color:#333;">30</span>
<span class="t" style="left:425.63px;top:378px;font-size:4.5px;color:#333;">32</span>
<span class="t" style="left:442.8px;top:378px;font-size:4.5px;color:#333;">34</span>
<span class="t" style="left:459.98px;top:378px;font-size:4.5px;color:#333;">36</span>
<span class="t" style="left:477.15px;top:378px;font-size:4.5px;color:#333;">38</span>
<span class="t" style="left:494.33px;top:378px;font-size:4.5px;color:#333;">40</span>
<span class="t" style="left:511.51px;top:378px;font-size:4.5px;color:#333;">42</span>
<span class="t" style="left:528.68px;top:378px;font-size:4.5px;color:#333;">44</span>
<span class="t" style="left:343.6px;top:385px;font-size:6.1px;color:#222;">Cycle</span>
<span class="t" style="left:126.3px;top:275px;font-size:6.4px;color:#222;transform:rotate(-90deg);transform-origin:50% 50%;width:14px;text-align:center;margin-left:-4px">ΔRn</span>
<span class="t" style="left:161.8px;top:219.2px;font-size:7.4px;font-weight:bold;color:#a01820;font-family:'Liberation Serif',serif">2,000.0</span>
<svg style="left:435.2px;top:147.6px" width="10" height="10" viewBox="0 0 10 10"><path d="M0.8 9l3.4-3.8" stroke="#c89858" stroke-width="1.3" stroke-linecap="round"/><circle cx="5.8" cy="3.2" r="2.7" fill="#eef2f8" stroke="#8890a0" stroke-width="0.7"/><rect x="3.5" y="2" width="2" height="1.6" fill="#334"/></svg>
<svg style="left:453.8px;top:147.6px" width="10" height="10" viewBox="0 0 10 10"><path d="M0.8 9l3.4-3.8" stroke="#c89858" stroke-width="1.3" stroke-linecap="round"/><circle cx="5.8" cy="3.2" r="2.7" fill="#eef2f8" stroke="#8890a0" stroke-width="0.7"/><path d="M3.6 2.9h1.6" stroke="#445" stroke-width="0.7"/></svg>
<svg style="left:472.8px;top:147.8px" width="9" height="9" viewBox="0 0 9 9"><rect x="2" y="0.4" width="5" height="4" fill="#e8ecf4" stroke="#68728c" stroke-width="0.5"/><path d="M0.5 8l1-4h6l1 4z" fill="#8a94ac" stroke="#58627c" stroke-width="0.5"/><rect x="1.6" y="6.6" width="5.8" height="1.6" fill="#f4f6fa" stroke="#68728c" stroke-width="0.4"/></svg>
<svg style="left:490px;top:146.8px" width="11" height="11" viewBox="0 0 11 11"><rect x="0.4" y="0.6" width="5" height="6.6" fill="#9ab8b4" stroke="#6a8c88" stroke-width="0.5"/><rect x="1.4" y="0.6" width="2.4" height="2.2" fill="#e4ecec"/><rect x="4.2" y="3.6" width="6.2" height="6.6" fill="#7c8c9c" stroke="#4c5868" stroke-width="0.5"/><rect x="5.4" y="3.8" width="3.6" height="2.6" fill="#e8ecf2"/><rect x="5.6" y="7.8" width="3.2" height="2.2" fill="#2c3440"/></svg>
<svg style="left:508.4px;top:146.8px" width="12" height="11.5" viewBox="0 0 12 11.5"><path d="M1 0.5v10.4h10.4" stroke="#7a8088" stroke-width="0.7" fill="none"/><path d="M2 6l2-1.6 1.6 1.2 2-2.4 1.4 1L11 1.6" stroke="#c04838" stroke-width="0.9" fill="none"/><path d="M1.6 8.2h9.6" stroke="#58a868" stroke-width="0.8"/></svg>
<svg style="left:527.6px;top:146.6px" width="11" height="11" viewBox="0 0 11 11"><circle cx="1.6" cy="1.6" r="1" fill="#402830"/><path d="M3.4 1.6h5.6" stroke="#c03838" stroke-width="0.8"/><circle cx="1.6" cy="4.2" r="0.9" fill="#d8d8c8"/><path d="M3.4 4.2h5.6" stroke="#e0e0d0" stroke-width="0.6"/><circle cx="1.6" cy="6.8" r="0.9" fill="#a8d8a8"/><path d="M3.4 6.8h5.6" stroke="#d0e4d0" stroke-width="0.6"/><circle cx="1.6" cy="9.4" r="0.9" fill="#78c888"/><path d="M3.4 9.4h5.6" stroke="#cfe4d4" stroke-width="0.6"/></svg>
<div class="a" style="left:120px;top:398.6px;width:423.4px;height:30.8px;border:0.8px solid #7f98a8;background:#fff"></div>
<div class="a" style="left:123.4px;top:396.5px;width:14.6px;height:4px;background:#fff"></div>
<span class="t" style="left:124.6px;top:398px;font-size:3.7px;color:#3a66a8;">Legend</span>
<div class="a" style="left:121.2px;top:403.5px;width:8.7px;height:7.1px;background:linear-gradient(90deg,#e03c14,#c8501c)"></div>
<span class="t" style="left:132.2px;top:405px;font-size:6.5px;color:#222;">A</span>
<div class="a" style="left:141.16px;top:403.5px;width:8.7px;height:7.1px;background:linear-gradient(90deg,#c8e020,#a8d838)"></div>
<span class="t" style="left:152.16px;top:405px;font-size:6.5px;color:#222;">B</span>
<div class="a" style="left:161.12px;top:403.5px;width:8.7px;height:7.1px;background:linear-gradient(90deg,#20d838,#38d050)"></div>
<span class="t" style="left:172.12px;top:405px;font-size:6.5px;color:#222;">C</span>
<div class="a" style="left:181.08px;top:403.5px;width:8.7px;height:7.1px;background:linear-gradient(90deg,#20a8e8,#38c0e0)"></div>
<span class="t" style="left:192.08px;top:405px;font-size:6.5px;color:#222;">D</span>
<div class="a" style="left:201.04px;top:403.5px;width:8.7px;height:7.1px;background:linear-gradient(90deg,#3010d0,#4828c8)"></div>
<span class="t" style="left:212.04px;top:405px;font-size:6.5px;color:#222;">E</span>
<div class="a" style="left:221px;top:403.5px;width:8.7px;height:7.1px;background:linear-gradient(90deg,#f010c0,#e030b0)"></div>
<span class="t" style="left:232px;top:405px;font-size:6.5px;color:#222;">F</span>
<div class="a" style="left:119.4px;top:438.4px;width:425.8px;height:49px;background:#fffbc8;border:0.8px solid #8fa3a8"></div>
<div class="a" style="left:119.8px;top:431.2px;width:34.2px;height:8.2px;background:#fffbc8;border:0.8px solid #8fa3a8;border-bottom:none;border-radius:5px 5px 0 0"></div>
<div class="a" style="left:120.6px;top:438px;width:32.6px;height:2px;background:#fffbc8"></div>
<span class="t" style="left:125.4px;top:433px;font-size:6.3px;transform:scaleX(0.924);transform-origin:0 0;font-weight:bold;color:#1c4a78;">Options</span>
<span class="t" style="left:124.9px;top:447px;font-size:6.35px;transform:scaleX(0.989);transform-origin:0 0;">Target:</span>
<div class="a" style="left:146.6px;top:443.6px;width:77px;height:10.9px;background:#fffde0;border:0.6px solid #a8a8a0"></div>
<span class="t" style="left:148px;top:447px;font-size:6.35px;transform:scaleX(1.008);transform-origin:0 0;">Mykoplasmen-Operon</span>
<svg style="left:215.6px;top:447.85px" width="5" height="3" viewBox="0 0 5 3"><path d="M0.4 0.4l2.1 2.1 2.1-2.1" stroke="#5a5a5a" stroke-width="0.6" fill="none"/></svg>
<span class="t" style="left:227px;top:447px;font-size:6.35px;transform:scaleX(0.987);transform-origin:0 0;">Threshold:</span>
<div class="a" style="left:262px;top:445.9px;width:6.6px;height:6.6px;background:#fff;border:0.6px solid #777;border-radius:1.5px"></div>
<span class="t" style="left:271px;top:447px;font-size:6.35px;transform:scaleX(0.919);transform-origin:0 0;">Auto</span>
<div class="a" style="left:288.2px;top:443.6px;width:60.4px;height:10.9px;background:#fff;border:0.6px solid #b4bcc8"></div>
<span class="t" style="left:290.6px;top:447px;font-size:6.35px;transform:scaleX(0.949);transform-origin:0 0;">2000</span>
<svg style="left:353.6px;top:445.8px" width="6.8" height="6.8" viewBox="0 0 6.8 6.8"><rect x="0.2" y="0.2" width="6.4" height="6.4" rx="1.4" fill="#1a66c4"/><path d="M1.5 3.4l1.4 1.4 2.4-2.7" stroke="#fff" stroke-width="0.9" fill="none"/></svg>
<span class="t" style="left:362px;top:447px;font-size:6.35px;transform:scaleX(0.995);transform-origin:0 0;">Auto Baseline</span>
<span class="t" style="left:121.6px;top:470px;font-size:6.35px;transform:scaleX(0.986);transform-origin:0 0;">Show:</span>
<svg style="left:143.6px;top:468.9px" width="6.8" height="6.8" viewBox="0 0 6.8 6.8"><rect x="0.2" y="0.2" width="6.4" height="6.4" rx="1.4" fill="#1a66c4"/><path d="M1.5 3.4l1.4 1.4 2.4-2.7" stroke="#fff" stroke-width="0.9" fill="none"/></svg>
<span class="t" style="left:151.9px;top:470px;font-size:6.35px;transform:scaleX(1.031);transform-origin:0 0;">Threshold</span>
<div class="a" style="left:183.4px;top:472px;width:9px;height:1px;background:#222"></div>
<div class="a" style="left:193.9px;top:469px;width:6.6px;height:6.6px;background:#fff;border:0.6px solid #777;border-radius:1.5px"></div>
<span class="t" style="left:202.6px;top:470px;font-size:6.35px;transform:scaleX(1.020);transform-origin:0 0;">Baseline Start: Well</span>
<div class="a" style="left:260.4px;top:470.2px;width:4px;height:4.2px;background:#30e030"></div>
<span class="t" style="left:268.9px;top:470px;font-size:6.35px;transform:scaleX(1.026);transform-origin:0 0;">Target</span>
<svg style="left:289px;top:470.8px" width="6.4" height="3.2" viewBox="0 0 6.4 3.2"><path d="M0.2 3L2.6 0.3l3.6 2.7z" fill="#48a848"/></svg>
<span class="t" style="left:299.5px;top:470px;font-size:6.35px;transform:scaleX(1.015);transform-origin:0 0;">Baseline End: Well</span>
<div class="a" style="left:358px;top:470.2px;width:3.8px;height:4.2px;background:#e01818"></div>
<span class="t" style="left:364px;top:470px;font-size:6.35px;transform:scaleX(1.020);transform-origin:0 0;">Target</span>
<svg style="left:384.2px;top:470.8px" width="6.4" height="3.2" viewBox="0 0 6.4 3.2"><path d="M0.2 3L3.6 0.3l2.6 2.7z" fill="#c04030"/></svg>
<div class="a" style="left:107px;top:495.4px;width:891.3px;height:13.6px;background:#fff"></div>
<div class="a" style="left:107px;top:508.6px;width:891.3px;height:1.4px;background:#8f96a8"></div>
<span class="t" style="left:112.4px;top:499px;font-size:6.2px;transform:scaleX(0.984);transform-origin:0 0;font-weight:bold;color:#111;">Analysis Summary:</span>
<span class="t" style="left:227.4px;top:499px;font-size:6.3px;transform:scaleX(1.012);transform-origin:0 0;">Total Wells in Plate: 48</span>
<span class="t" style="left:350.8px;top:499px;font-size:6.3px;transform:scaleX(1.008);transform-origin:0 0;">Wells Set Up: 48</span>
<span class="t" style="left:456.6px;top:499px;font-size:6.3px;transform:scaleX(0.991);transform-origin:0 0;">Wells Omitted Manually: 0</span>
<span class="t" style="left:589.2px;top:499px;font-size:6.3px;transform:scaleX(1.002);transform-origin:0 0;">Wells Flagged: 23</span>
<span class="t" style="left:698.6px;top:499px;font-size:6.3px;transform:scaleX(1.000);transform-origin:0 0;">Wells Omitted by Analysis: 0</span>
<span class="t" style="left:836.8px;top:499px;font-size:6.3px;transform:scaleX(1.030);transform-origin:0 0;">Samples Used: 24</span>
<span class="t" style="left:948.8px;top:499px;font-size:6.3px;transform:scaleX(1.058);transform-origin:0 0;">Targets Used: 2</span>
<svg style="left:551.6px;top:76.6px" width="4" height="6.4" viewBox="0 0 4 6.4"><path d="M3.4 0.4L0.7 3.2l2.7 2.8" stroke="#111" stroke-width="1.3" fill="none"/></svg>
<svg style="left:551.4px;top:88.4px" width="4" height="6.4" viewBox="0 0 4 6.4"><path d="M0.6 0.4l2.7 2.8-2.7 2.8" stroke="#111" stroke-width="1.3" fill="none"/></svg>
<div class="a" style="left:552px;top:279.5px;width:1.4px;height:10px;background:repeating-linear-gradient(#fff 0 1px,#777 1px 2px)"></div>
<svg style="left:0;top:0" width="1000" height="563"><rect x="557.15" y="86.6" width="437.5" height="406.3" fill="#fff" stroke="#8797a6" stroke-width="1.6"/></svg>
<div class="a" style="left:558.8px;top:73.8px;width:84.4px;height:13.6px;border:0.8px solid #8797a6;border-bottom:none;border-radius:2.5px 2.5px 0 0;background:#fff"></div>
<div class="a" style="left:558.8px;top:86px;width:84.4px;height:1.5px;background:#8797a6"></div>
<div class="a" style="left:643.8px;top:73px;width:76.6px;height:15px;border:0.8px solid #8797a6;border-bottom:none;border-top:1.5px solid #e4cc3c;border-radius:2.5px 2.5px 0 0;background:#fff"></div>
<span class="t" style="left:568.4px;top:76px;font-size:8.7px;transform:scaleX(0.934);transform-origin:0 0;color:#666;">View Plate Layout</span>
<span class="t" style="left:649.4px;top:75px;font-size:8.7px;transform:scaleX(1.067);transform-origin:0 0;color:#1a1a1a;">View Well Table</span>
<span class="t" style="left:693.7px;top:94px;font-size:6.3px;transform:scaleX(1.013);transform-origin:0 0;">Select Wells With:</span>
<div class="a" style="left:749px;top:91.2px;width:52.6px;height:10.8px;background:#fff;border:0.6px solid #c4c4c4"></div>
<span class="t" style="left:751px;top:94px;font-size:6.35px;transform:scaleX(0.974);transform-origin:0 0;">- Select Item -</span>
<svg style="left:793.6px;top:95.4px" width="5" height="3" viewBox="0 0 5 3"><path d="M0.4 0.4l2.1 2.1 2.1-2.1" stroke="#5a5a5a" stroke-width="0.6" fill="none"/></svg>
<div class="a" style="left:804.5px;top:91.2px;width:53px;height:10.8px;background:#f6f6f6;border:0.6px solid #d4d4d4"></div>
<span class="t" style="left:806.3px;top:94px;font-size:6.35px;transform:scaleX(0.992);transform-origin:0 0;color:#9a9a9a;">- Select Item -</span>
<svg style="left:850px;top:95.6px" width="5" height="3" viewBox="0 0 5 3"><path d="M0.4 0.4l2.1 2.1 2.1-2.1" stroke="#b8b8b8" stroke-width="0.6" fill="none"/></svg>
<div class="a" style="left:560.3px;top:107px;width:430.7px;height:19.6px;background:#c4d1ea;border:0.8px solid #98a8c8"></div>
<div class="a" style="left:561.6px;top:109.4px;width:57.6px;height:14px;background:linear-gradient(#d2d9ea,#c2cbe0);border:0.7px solid #8a93ac;box-shadow:inset 0.6px 0.6px 0 #eef1f8"></div>
<span class="t" style="left:566px;top:114px;font-size:6.2px;transform:scaleX(1.036);transform-origin:0 0;color:#111;">Show in Table ▼</span>
<div class="a" style="left:620px;top:109.4px;width:43.2px;height:14px;background:linear-gradient(#d2d9ea,#c2cbe0);border:0.7px solid #8a93ac;box-shadow:inset 0.6px 0.6px 0 #eef1f8"></div>
<span class="t" style="left:625.2px;top:114px;font-size:6.2px;transform:scaleX(0.963);transform-origin:0 0;color:#111;">Group By ▼</span>
<svg style="left:882px;top:111.4px" width="11" height="9" viewBox="0 0 11 9"><rect x="0" y="0" width="4" height="9" fill="#aabfe2"/><rect x="3.2" y="0.4" width="7.4" height="8.2" fill="#9fb6de" stroke="#93acd8" stroke-width="0.5"/><rect x="5" y="2.6" width="3.8" height="3.8" fill="#e4ecf8"/><path d="M5.8 4.5h2.2M6.9 3.4v2.2" stroke="#9cb2dc" stroke-width="0.6"/></svg>
<span class="t" style="left:896.3px;top:114px;font-size:6.2px;transform:scaleX(1.041);transform-origin:0 0;color:#e6ecf8;">Expand All</span>
<svg style="left:937px;top:111.4px" width="11" height="9" viewBox="0 0 11 9"><rect x="0" y="0" width="4" height="9" fill="#aabfe2"/><rect x="3.2" y="0.4" width="7.4" height="8.2" fill="#9fb6de" stroke="#93acd8" stroke-width="0.5"/><rect x="5" y="2.6" width="3.8" height="3.8" fill="#e4ecf8"/><path d="M5.8 4.5h2.2" stroke="#9cb2dc" stroke-width="0.6"/></svg>
<span class="t" style="left:951.3px;top:114px;font-size:6.2px;transform:scaleX(1.003);transform-origin:0 0;color:#e6ecf8;">Collapse All</span>
<div class="a" style="left:557.8px;top:134.8px;width:435.6px;height:13.8px;background:#fff;border-top:0.7px solid #b4bcc8;border-bottom:0.7px solid #d8dbe2"></div>
<div class="a" style="left:572.6px;top:135.4px;width:0.6px;height:13px;background:#d6d9df"></div>
<div class="a" style="left:611.6px;top:135.4px;width:0.6px;height:13px;background:#d6d9df"></div>
<div class="a" style="left:650.6px;top:135.4px;width:0.6px;height:13px;background:#d6d9df"></div>
<div class="a" style="left:689.6px;top:135.4px;width:0.6px;height:13px;background:#d6d9df"></div>
<div class="a" style="left:728.6px;top:135.4px;width:0.6px;height:13px;background:#d6d9df"></div>
<div class="a" style="left:767.6px;top:135.4px;width:0.6px;height:13px;background:#d6d9df"></div>
<div class="a" style="left:806.6px;top:135.4px;width:0.6px;height:13px;background:#d6d9df"></div>
<div class="a" style="left:845.6px;top:135.4px;width:0.6px;height:13px;background:#d6d9df"></div>
<div class="a" style="left:884.6px;top:135.4px;width:0.6px;height:13px;background:#d6d9df"></div>
<div class="a" style="left:923.6px;top:135.4px;width:0.6px;height:13px;background:#d6d9df"></div>
<div class="a" style="left:962.6px;top:135.4px;width:0.6px;height:13px;background:#d6d9df"></div>
<span class="t" style="left:561.3px;top:140px;font-size:5.4px;font-weight:bold;color:#333;">#</span>
<span class="t" style="left:575.8px;top:140px;font-size:6.6px;transform:scaleX(0.939);transform-origin:0 0;color:#333;">Well</span>
<span class="t" style="left:614.8px;top:140px;font-size:6.6px;transform:scaleX(0.939);transform-origin:0 0;color:#333;">Omit</span>
<span class="t" style="left:653.8px;top:140px;font-size:6.6px;transform:scaleX(0.939);transform-origin:0 0;color:#333;">Flag</span>
<span class="t" style="left:692.8px;top:140px;font-size:6.6px;transform:scaleX(0.939);transform-origin:0 0;color:#333;">Sample N...</span>
<span class="t" style="left:731.9px;top:140px;font-size:6.6px;transform:scaleX(0.939);transform-origin:0 0;color:#333;">Target Na...</span>
<span class="t" style="left:770.9px;top:140px;font-size:6.6px;transform:scaleX(0.939);transform-origin:0 0;color:#333;">Ct</span>
<span class="t" style="left:809.8px;top:140px;font-size:6.6px;transform:scaleX(0.939);transform-origin:0 0;color:#333;">Task</span>
<span class="t" style="left:848.8px;top:140px;font-size:6.6px;transform:scaleX(0.939);transform-origin:0 0;color:#333;">Dyes</span>
<span class="t" style="left:887.8px;top:140px;font-size:6.6px;transform:scaleX(0.939);transform-origin:0 0;color:#333;">ΔRn</span>
<span class="t" style="left:926.8px;top:140px;font-size:6.6px;transform:scaleX(0.939);transform-origin:0 0;color:#333;">ΔRn Mean</span>
<span class="t" style="left:965.8px;top:140px;font-size:6.6px;transform:scaleX(0.939);transform-origin:0 0;color:#333;">ΔRn S</span>
<div class="a" style="left:557.8px;top:149px;width:435.6px;height:334.4px;overflow:hidden">
<div class="a" style="left:0px;top:0px;width:426px;height:9.43px;background:#dfe3ef"></div>
<div class="a" style="left:0px;top:0px;width:14.8px;height:9.43px;background:#c3cde0"></div>
<span class="t" style="left:7.08px;top:2px;font-size:6.7px;transform:scaleX(0.955);transform-origin:0 0;color:#333;">43</span>
<span class="t" style="left:25.6px;top:2px;font-size:6.7px;transform:scaleX(0.955);transform-origin:0 0;color:#222;">C6</span>
<div class="a" style="left:70.6px;top:1.69px;width:6.2px;height:6.2px;background:#fff;border:0.6px solid #8a8a8a;border-radius:1.4px"></div>
<span class="t" style="left:167.6px;top:4px;font-size:5px;color:#555;">..</span>
<span class="t" style="left:172.2px;top:2px;font-size:6.7px;transform:scaleX(0.930);transform-origin:0 0;color:#222;">Mykoplasm...</span>
<span class="t" style="left:211.4px;top:2px;font-size:6.7px;transform:scaleX(0.963);transform-origin:0 0;color:#222;">45.0</span>
<span class="t" style="left:250.1px;top:2px;font-size:6.7px;transform:scaleX(0.953);transform-origin:0 0;color:#222;">UNKNOWN</span>
<span class="t" style="left:288.8px;top:2px;font-size:6.7px;transform:scaleX(0.943);transform-origin:0 0;color:#222;">FAM-None</span>
<div class="a" style="left:0px;top:9.38px;width:426px;height:9.43px;background:#ffffff"></div>
<div class="a" style="left:0px;top:9.38px;width:14.8px;height:9.43px;background:#c3cde0"></div>
<span class="t" style="left:7.08px;top:12px;font-size:6.7px;transform:scaleX(0.955);transform-origin:0 0;color:#333;">44</span>
<span class="t" style="left:25.6px;top:12px;font-size:6.7px;transform:scaleX(0.955);transform-origin:0 0;color:#222;">C6</span>
<div class="a" style="left:70.6px;top:11.07px;width:6.2px;height:6.2px;background:#fff;border:0.6px solid #8a8a8a;border-radius:1.4px"></div>
<span class="t" style="left:167.6px;top:13px;font-size:5px;color:#555;">..</span>
<span class="t" style="left:172.2px;top:12px;font-size:6.7px;transform:scaleX(0.976);transform-origin:0 0;color:#222;">PCR-Kontr...</span>
<span class="t" style="left:211.4px;top:12px;font-size:6.7px;transform:scaleX(0.963);transform-origin:0 0;color:#222;">19.79522</span>
<span class="t" style="left:250.1px;top:12px;font-size:6.7px;transform:scaleX(0.953);transform-origin:0 0;color:#222;">UNKNOWN</span>
<span class="t" style="left:288.8px;top:12px;font-size:6.7px;transform:scaleX(0.922);transform-origin:0 0;color:#222;">ROX-None</span>
<div class="a" style="left:0px;top:18.76px;width:426px;height:9.43px;background:#dfe3ef"></div>
<div class="a" style="left:0px;top:18.76px;width:14.8px;height:9.43px;background:#c3cde0"></div>
<span class="t" style="left:7.08px;top:21px;font-size:6.7px;transform:scaleX(0.955);transform-origin:0 0;color:#333;">45</span>
<span class="t" style="left:25.6px;top:21px;font-size:6.7px;transform:scaleX(0.955);transform-origin:0 0;color:#222;">C7</span>
<div class="a" style="left:70.6px;top:20.45px;width:6.2px;height:6.2px;background:#fff;border:0.6px solid #8a8a8a;border-radius:1.4px"></div>
<span class="t" style="left:167.6px;top:23px;font-size:5px;color:#555;">..</span>
<span class="t" style="left:172.2px;top:21px;font-size:6.7px;transform:scaleX(0.930);transform-origin:0 0;color:#222;">Mykoplasm...</span>
<span class="t" style="left:211.4px;top:21px;font-size:6.7px;transform:scaleX(0.963);transform-origin:0 0;color:#222;">45.0</span>
<span class="t" style="left:250.1px;top:21px;font-size:6.7px;transform:scaleX(0.953);transform-origin:0 0;color:#222;">UNKNOWN</span>
<span class="t" style="left:288.8px;top:21px;font-size:6.7px;transform:scaleX(0.943);transform-origin:0 0;color:#222;">FAM-None</span>
<div class="a" style="left:0px;top:28.14px;width:426px;height:9.43px;background:#ffffff"></div>
<div class="a" style="left:0px;top:28.14px;width:14.8px;height:9.43px;background:#c3cde0"></div>
<span class="t" style="left:7.08px;top:30px;font-size:6.7px;transform:scaleX(0.955);transform-origin:0 0;color:#333;">46</span>
<span class="t" style="left:25.6px;top:30px;font-size:6.7px;transform:scaleX(0.955);transform-origin:0 0;color:#222;">C7</span>
<div class="a" style="left:70.6px;top:29.83px;width:6.2px;height:6.2px;background:#fff;border:0.6px solid #8a8a8a;border-radius:1.4px"></div>
<span class="t" style="left:167.6px;top:32px;font-size:5px;color:#555;">..</span>
<span class="t" style="left:172.2px;top:30px;font-size:6.7px;transform:scaleX(0.976);transform-origin:0 0;color:#222;">PCR-Kontr...</span>
<span class="t" style="left:211.4px;top:30px;font-size:6.7px;transform:scaleX(0.963);transform-origin:0 0;color:#222;">45.0</span>
<span class="t" style="left:250.1px;top:30px;font-size:6.7px;transform:scaleX(0.953);transform-origin:0 0;color:#222;">UNKNOWN</span>
<span class="t" style="left:288.8px;top:30px;font-size:6.7px;transform:scaleX(0.922);transform-origin:0 0;color:#222;">ROX-None</span>
<div class="a" style="left:0px;top:37.52px;width:426px;height:9.43px;background:#dfe3ef"></div>
<div class="a" style="left:0px;top:37.52px;width:14.8px;height:9.43px;background:#c3cde0"></div>
<span class="t" style="left:7.08px;top:40px;font-size:6.7px;transform:scaleX(0.955);transform-origin:0 0;color:#333;">47</span>
<span class="t" style="left:25.6px;top:40px;font-size:6.7px;transform:scaleX(0.955);transform-origin:0 0;color:#222;">C8</span>
<div class="a" style="left:70.6px;top:39.21px;width:6.2px;height:6.2px;background:#fff;border:0.6px solid #8a8a8a;border-radius:1.4px"></div>
<span class="t" style="left:167.6px;top:41px;font-size:5px;color:#555;">..</span>
<span class="t" style="left:172.2px;top:40px;font-size:6.7px;transform:scaleX(0.930);transform-origin:0 0;color:#222;">Mykoplasm...</span>
<span class="t" style="left:211.4px;top:40px;font-size:6.7px;transform:scaleX(0.963);transform-origin:0 0;color:#222;">45.0</span>
<span class="t" style="left:250.1px;top:40px;font-size:6.7px;transform:scaleX(0.953);transform-origin:0 0;color:#222;">UNKNOWN</span>
<span class="t" style="left:288.8px;top:40px;font-size:6.7px;transform:scaleX(0.943);transform-origin:0 0;color:#222;">FAM-None</span>
<div class="a" style="left:0px;top:46.9px;width:426px;height:9.43px;background:#ffffff"></div>
<div class="a" style="left:0px;top:46.9px;width:14.8px;height:9.43px;background:#c3cde0"></div>
<span class="t" style="left:7.08px;top:49px;font-size:6.7px;transform:scaleX(0.955);transform-origin:0 0;color:#333;">48</span>
<span class="t" style="left:25.6px;top:49px;font-size:6.7px;transform:scaleX(0.955);transform-origin:0 0;color:#222;">C8</span>
<div class="a" style="left:70.6px;top:48.59px;width:6.2px;height:6.2px;background:#fff;border:0.6px solid #8a8a8a;border-radius:1.4px"></div>
<span class="t" style="left:167.6px;top:51px;font-size:5px;color:#555;">..</span>
<span class="t" style="left:172.2px;top:49px;font-size:6.7px;transform:scaleX(0.976);transform-origin:0 0;color:#222;">PCR-Kontr...</span>
<span class="t" style="left:211.4px;top:49px;font-size:6.7px;transform:scaleX(0.963);transform-origin:0 0;color:#222;">45.0</span>
<span class="t" style="left:250.1px;top:49px;font-size:6.7px;transform:scaleX(0.953);transform-origin:0 0;color:#222;">UNKNOWN</span>
<span class="t" style="left:288.8px;top:49px;font-size:6.7px;transform:scaleX(0.922);transform-origin:0 0;color:#222;">ROX-None</span>
<div class="a" style="left:0px;top:56.28px;width:426px;height:9.43px;background:#bacdf6"></div>
<div class="a" style="left:0px;top:56.28px;width:14.8px;height:9.43px;background:#aebfe2"></div>
<span class="t" style="left:7.08px;top:59px;font-size:6.7px;transform:scaleX(0.955);transform-origin:0 0;color:#333;">49</span>
<span class="t" style="left:25.6px;top:59px;font-size:6.7px;transform:scaleX(0.955);transform-origin:0 0;color:#222;">D1</span>
<div class="a" style="left:70.6px;top:57.97px;width:6.2px;height:6.2px;background:#fff;border:0.6px solid #8a8a8a;border-radius:1.4px"></div>
<span class="t" style="left:133.2px;top:59px;font-size:6.7px;transform:scaleX(0.924);transform-origin:0 0;color:#222;">10CFU MP</span>
<svg style="left:108.2px;top:57.37px" width="8" height="7.4" viewBox="0 0 8 7.4"><path d="M4 0.3C5.2 0.3 5.6 3 7.6 6.9H0.4C2.4 3 2.8 0.3 4 0.3z" fill="#f2c22c" stroke="#e2aa1c" stroke-width="0.4"/><text x="4" y="6.2" text-anchor="middle" font-size="4.6" font-weight="bold" font-family="Liberation Sans,sans-serif" fill="#7a4a00">1</text></svg>
<span class="t" style="left:172.2px;top:59px;font-size:6.7px;transform:scaleX(0.930);transform-origin:0 0;color:#222;">Mykoplasm...</span>
<span class="t" style="left:211.4px;top:59px;font-size:6.7px;transform:scaleX(0.963);transform-origin:0 0;color:#222;">32.94969</span>
<span class="t" style="left:250.1px;top:59px;font-size:6.7px;transform:scaleX(0.953);transform-origin:0 0;color:#222;">UNKNOWN</span>
<span class="t" style="left:288.8px;top:59px;font-size:6.7px;transform:scaleX(0.943);transform-origin:0 0;color:#222;">FAM-None</span>
<div class="a" style="left:0px;top:65.66px;width:426px;height:9.43px;background:#bacdf6"></div>
<div class="a" style="left:0px;top:65.66px;width:14.8px;height:9.43px;background:#aebfe2"></div>
<span class="t" style="left:7.08px;top:68px;font-size:6.7px;transform:scaleX(0.955);transform-origin:0 0;color:#333;">50</span>
<span class="t" style="left:25.6px;top:68px;font-size:6.7px;transform:scaleX(0.955);transform-origin:0 0;color:#222;">D1</span>
<div class="a" style="left:70.6px;top:67.35px;width:6.2px;height:6.2px;background:#fff;border:0.6px solid #8a8a8a;border-radius:1.4px"></div>
<span class="t" style="left:133.2px;top:68px;font-size:6.7px;transform:scaleX(0.924);transform-origin:0 0;color:#222;">10CFU MP</span>
<svg style="left:108.2px;top:66.75px" width="8" height="7.4" viewBox="0 0 8 7.4"><path d="M4 0.3C5.2 0.3 5.6 3 7.6 6.9H0.4C2.4 3 2.8 0.3 4 0.3z" fill="#f2c22c" stroke="#e2aa1c" stroke-width="0.4"/><text x="4" y="6.2" text-anchor="middle" font-size="4.6" font-weight="bold" font-family="Liberation Sans,sans-serif" fill="#7a4a00">1</text></svg>
<span class="t" style="left:172.2px;top:68px;font-size:6.7px;transform:scaleX(0.976);transform-origin:0 0;color:#222;">PCR-Kontr...</span>
<span class="t" style="left:211.4px;top:68px;font-size:6.7px;transform:scaleX(0.963);transform-origin:0 0;color:#222;">45.0</span>
<span class="t" style="left:250.1px;top:68px;font-size:6.7px;transform:scaleX(0.953);transform-origin:0 0;color:#222;">UNKNOWN</span>
<span class="t" style="left:288.8px;top:68px;font-size:6.7px;transform:scaleX(0.922);transform-origin:0 0;color:#222;">ROX-None</span>
<div class="a" style="left:0px;top:75.04px;width:426px;height:9.43px;background:#bacdf6"></div>
<div class="a" style="left:0px;top:75.04px;width:14.8px;height:9.43px;background:#aebfe2"></div>
<span class="t" style="left:7.08px;top:77px;font-size:6.7px;transform:scaleX(0.955);transform-origin:0 0;color:#333;">51</span>
<span class="t" style="left:25.6px;top:77px;font-size:6.7px;transform:scaleX(0.955);transform-origin:0 0;color:#222;">D2</span>
<div class="a" style="left:70.6px;top:76.73px;width:6.2px;height:6.2px;background:#fff;border:0.6px solid #8a8a8a;border-radius:1.4px"></div>
<span class="t" style="left:133.2px;top:77px;font-size:6.7px;transform:scaleX(0.924);transform-origin:0 0;color:#222;">10CFU MP</span>
<span class="t" style="left:172.2px;top:77px;font-size:6.7px;transform:scaleX(0.930);transform-origin:0 0;color:#222;">Mykoplasm...</span>
<span class="t" style="left:211.4px;top:77px;font-size:6.7px;transform:scaleX(0.963);transform-origin:0 0;color:#222;">38.534893</span>
<span class="t" style="left:250.1px;top:77px;font-size:6.7px;transform:scaleX(0.953);transform-origin:0 0;color:#222;">UNKNOWN</span>
<span class="t" style="left:288.8px;top:77px;font-size:6.7px;transform:scaleX(0.943);transform-origin:0 0;color:#222;">FAM-None</span>
<div class="a" style="left:0px;top:84.42px;width:426px;height:9.43px;background:#bacdf6"></div>
<div class="a" style="left:0px;top:84.42px;width:14.8px;height:9.43px;background:#aebfe2"></div>
<span class="t" style="left:7.08px;top:87px;font-size:6.7px;transform:scaleX(0.955);transform-origin:0 0;color:#333;">52</span>
<span class="t" style="left:25.6px;top:87px;font-size:6.7px;transform:scaleX(0.955);transform-origin:0 0;color:#222;">D2</span>
<div class="a" style="left:70.6px;top:86.11px;width:6.2px;height:6.2px;background:#fff;border:0.6px solid #8a8a8a;border-radius:1.4px"></div>
<span class="t" style="left:133.2px;top:87px;font-size:6.7px;transform:scaleX(0.924);transform-origin:0 0;color:#222;">10CFU MP</span>
<span class="t" style="left:172.2px;top:87px;font-size:6.7px;transform:scaleX(0.976);transform-origin:0 0;color:#222;">PCR-Kontr...</span>
<span class="t" style="left:211.4px;top:87px;font-size:6.7px;transform:scaleX(0.963);transform-origin:0 0;color:#222;">16.063549</span>
<span class="t" style="left:250.1px;top:87px;font-size:6.7px;transform:scaleX(0.953);transform-origin:0 0;color:#222;">UNKNOWN</span>
<span class="t" style="left:288.8px;top:87px;font-size:6.7px;transform:scaleX(0.922);transform-origin:0 0;color:#222;">ROX-None</span>
<div class="a" style="left:0px;top:93.8px;width:426px;height:9.43px;background:#dfe3ef"></div>
<div class="a" style="left:0px;top:93.8px;width:14.8px;height:9.43px;background:#c3cde0"></div>
<span class="t" style="left:7.08px;top:96px;font-size:6.7px;transform:scaleX(0.955);transform-origin:0 0;color:#333;">53</span>
<span class="t" style="left:25.6px;top:96px;font-size:6.7px;transform:scaleX(0.955);transform-origin:0 0;color:#222;">D3</span>
<div class="a" style="left:70.6px;top:95.49px;width:6.2px;height:6.2px;background:#fff;border:0.6px solid #8a8a8a;border-radius:1.4px"></div>
<span class="t" style="left:167.6px;top:98px;font-size:5px;color:#555;">..</span>
<span class="t" style="left:172.2px;top:96px;font-size:6.7px;transform:scaleX(0.930);transform-origin:0 0;color:#222;">Mykoplasm...</span>
<span class="t" style="left:211.4px;top:96px;font-size:6.7px;transform:scaleX(0.963);transform-origin:0 0;color:#222;">45.0</span>
<span class="t" style="left:250.1px;top:96px;font-size:6.7px;transform:scaleX(0.953);transform-origin:0 0;color:#222;">UNKNOWN</span>
<span class="t" style="left:288.8px;top:96px;font-size:6.7px;transform:scaleX(0.943);transform-origin:0 0;color:#222;">FAM-None</span>
<div class="a" style="left:0px;top:103.18px;width:426px;height:9.43px;background:#ffffff"></div>
<div class="a" style="left:0px;top:103.18px;width:14.8px;height:9.43px;background:#c3cde0"></div>
<span class="t" style="left:7.08px;top:105px;font-size:6.7px;transform:scaleX(0.955);transform-origin:0 0;color:#333;">54</span>
<span class="t" style="left:25.6px;top:105px;font-size:6.7px;transform:scaleX(0.955);transform-origin:0 0;color:#222;">D3</span>
<div class="a" style="left:70.6px;top:104.87px;width:6.2px;height:6.2px;background:#fff;border:0.6px solid #8a8a8a;border-radius:1.4px"></div>
<span class="t" style="left:167.6px;top:107px;font-size:5px;color:#555;">..</span>
<span class="t" style="left:172.2px;top:105px;font-size:6.7px;transform:scaleX(0.976);transform-origin:0 0;color:#222;">PCR-Kontr...</span>
<span class="t" style="left:211.4px;top:105px;font-size:6.7px;transform:scaleX(0.963);transform-origin:0 0;color:#222;">35.4263</span>
<span class="t" style="left:250.1px;top:105px;font-size:6.7px;transform:scaleX(0.953);transform-origin:0 0;color:#222;">UNKNOWN</span>
<span class="t" style="left:288.8px;top:105px;font-size:6.7px;transform:scaleX(0.922);transform-origin:0 0;color:#222;">ROX-None</span>
<div class="a" style="left:0px;top:112.56px;width:426px;height:9.43px;background:#dfe3ef"></div>
<div class="a" style="left:0px;top:112.56px;width:14.8px;height:9.43px;background:#c3cde0"></div>
<span class="t" style="left:7.08px;top:115px;font-size:6.7px;transform:scaleX(0.955);transform-origin:0 0;color:#333;">55</span>
<span class="t" style="left:25.6px;top:115px;font-size:6.7px;transform:scaleX(0.955);transform-origin:0 0;color:#222;">D4</span>
<div class="a" style="left:70.6px;top:114.25px;width:6.2px;height:6.2px;background:#fff;border:0.6px solid #8a8a8a;border-radius:1.4px"></div>
<span class="t" style="left:167.6px;top:116px;font-size:5px;color:#555;">..</span>
<span class="t" style="left:172.2px;top:115px;font-size:6.7px;transform:scaleX(0.930);transform-origin:0 0;color:#222;">Mykoplasm...</span>
<span class="t" style="left:211.4px;top:115px;font-size:6.7px;transform:scaleX(0.963);transform-origin:0 0;color:#222;">45.0</span>
<span class="t" style="left:250.1px;top:115px;font-size:6.7px;transform:scaleX(0.953);transform-origin:0 0;color:#222;">UNKNOWN</span>
<span class="t" style="left:288.8px;top:115px;font-size:6.7px;transform:scaleX(0.943);transform-origin:0 0;color:#222;">FAM-None</span>
<div class="a" style="left:0px;top:121.94px;width:426px;height:9.43px;background:#ffffff"></div>
<div class="a" style="left:0px;top:121.94px;width:14.8px;height:9.43px;background:#c3cde0"></div>
<span class="t" style="left:7.08px;top:124px;font-size:6.7px;transform:scaleX(0.955);transform-origin:0 0;color:#333;">56</span>
<span class="t" style="left:25.6px;top:124px;font-size:6.7px;transform:scaleX(0.955);transform-origin:0 0;color:#222;">D4</span>
<div class="a" style="left:70.6px;top:123.63px;width:6.2px;height:6.2px;background:#fff;border:0.6px solid #8a8a8a;border-radius:1.4px"></div>
<span class="t" style="left:167.6px;top:126px;font-size:5px;color:#555;">..</span>
<span class="t" style="left:172.2px;top:124px;font-size:6.7px;transform:scaleX(0.976);transform-origin:0 0;color:#222;">PCR-Kontr...</span>
<span class="t" style="left:211.4px;top:124px;font-size:6.7px;transform:scaleX(0.963);transform-origin:0 0;color:#222;">13.108313</span>
<span class="t" style="left:250.1px;top:124px;font-size:6.7px;transform:scaleX(0.953);transform-origin:0 0;color:#222;">UNKNOWN</span>
<span class="t" style="left:288.8px;top:124px;font-size:6.7px;transform:scaleX(0.922);transform-origin:0 0;color:#222;">ROX-None</span>
<div class="a" style="left:0px;top:131.32px;width:426px;height:9.43px;background:#dfe3ef"></div>
<div class="a" style="left:0px;top:131.32px;width:14.8px;height:9.43px;background:#c3cde0"></div>
<span class="t" style="left:7.08px;top:134px;font-size:6.7px;transform:scaleX(0.955);transform-origin:0 0;color:#333;">57</span>
<span class="t" style="left:25.6px;top:134px;font-size:6.7px;transform:scaleX(0.955);transform-origin:0 0;color:#222;">D5</span>
<div class="a" style="left:70.6px;top:133.01px;width:6.2px;height:6.2px;background:#fff;border:0.6px solid #8a8a8a;border-radius:1.4px"></div>
<span class="t" style="left:167.6px;top:135px;font-size:5px;color:#555;">..</span>
<span class="t" style="left:172.2px;top:134px;font-size:6.7px;transform:scaleX(0.930);transform-origin:0 0;color:#222;">Mykoplasm...</span>
<span class="t" style="left:211.4px;top:134px;font-size:6.7px;transform:scaleX(0.963);transform-origin:0 0;color:#222;">45.0</span>
<span class="t" style="left:250.1px;top:134px;font-size:6.7px;transform:scaleX(0.953);transform-origin:0 0;color:#222;">UNKNOWN</span>
<span class="t" style="left:288.8px;top:134px;font-size:6.7px;transform:scaleX(0.943);transform-origin:0 0;color:#222;">FAM-None</span>
<div class="a" style="left:0px;top:140.7px;width:426px;height:9.43px;background:#ffffff"></div>
<div class="a" style="left:0px;top:140.7px;width:14.8px;height:9.43px;background:#c3cde0"></div>
<span class="t" style="left:7.08px;top:143px;font-size:6.7px;transform:scaleX(0.955);transform-origin:0 0;color:#333;">58</span>
<span class="t" style="left:25.6px;top:143px;font-size:6.7px;transform:scaleX(0.955);transform-origin:0 0;color:#222;">D5</span>
<div class="a" style="left:70.6px;top:142.39px;width:6.2px;height:6.2px;background:#fff;border:0.6px solid #8a8a8a;border-radius:1.4px"></div>
<span class="t" style="left:167.6px;top:144px;font-size:5px;color:#555;">..</span>
<span class="t" style="left:172.2px;top:143px;font-size:6.7px;transform:scaleX(0.976);transform-origin:0 0;color:#222;">PCR-Kontr...</span>
<span class="t" style="left:211.4px;top:143px;font-size:6.7px;transform:scaleX(0.963);transform-origin:0 0;color:#222;">25.07824</span>
<span class="t" style="left:250.1px;top:143px;font-size:6.7px;transform:scaleX(0.953);transform-origin:0 0;color:#222;">UNKNOWN</span>
<span class="t" style="left:288.8px;top:143px;font-size:6.7px;transform:scaleX(0.922);transform-origin:0 0;color:#222;">ROX-None</span>
<div class="a" style="left:0px;top:150.08px;width:426px;height:9.43px;background:#dfe3ef"></div>
<div class="a" style="left:0px;top:150.08px;width:14.8px;height:9.43px;background:#c3cde0"></div>
<span class="t" style="left:7.08px;top:152px;font-size:6.7px;transform:scaleX(0.955);transform-origin:0 0;color:#333;">59</span>
<span class="t" style="left:25.6px;top:152px;font-size:6.7px;transform:scaleX(0.955);transform-origin:0 0;color:#222;">D6</span>
<div class="a" style="left:70.6px;top:151.77px;width:6.2px;height:6.2px;background:#fff;border:0.6px solid #8a8a8a;border-radius:1.4px"></div>
<span class="t" style="left:167.6px;top:154px;font-size:5px;color:#555;">..</span>
<span class="t" style="left:172.2px;top:152px;font-size:6.7px;transform:scaleX(0.930);transform-origin:0 0;color:#222;">Mykoplasm...</span>
<span class="t" style="left:211.4px;top:152px;font-size:6.7px;transform:scaleX(0.963);transform-origin:0 0;color:#222;">45.0</span>
<span class="t" style="left:250.1px;top:152px;font-size:6.7px;transform:scaleX(0.953);transform-origin:0 0;color:#222;">UNKNOWN</span>
<span class="t" style="left:288.8px;top:152px;font-size:6.7px;transform:scaleX(0.943);transform-origin:0 0;color:#222;">FAM-None</span>
<div class="a" style="left:0px;top:159.46px;width:426px;height:9.43px;background:#ffffff"></div>
<div class="a" style="left:0px;top:159.46px;width:14.8px;height:9.43px;background:#c3cde0"></div>
<span class="t" style="left:7.08px;top:162px;font-size:6.7px;transform:scaleX(0.955);transform-origin:0 0;color:#333;">60</span>
<span class="t" style="left:25.6px;top:162px;font-size:6.7px;transform:scaleX(0.955);transform-origin:0 0;color:#222;">D6</span>
<div class="a" style="left:70.6px;top:161.15px;width:6.2px;height:6.2px;background:#fff;border:0.6px solid #8a8a8a;border-radius:1.4px"></div>
<span class="t" style="left:167.6px;top:163px;font-size:5px;color:#555;">..</span>
<span class="t" style="left:172.2px;top:162px;font-size:6.7px;transform:scaleX(0.976);transform-origin:0 0;color:#222;">PCR-Kontr...</span>
<span class="t" style="left:211.4px;top:162px;font-size:6.7px;transform:scaleX(0.963);transform-origin:0 0;color:#222;">45.0</span>
<span class="t" style="left:250.1px;top:162px;font-size:6.7px;transform:scaleX(0.953);transform-origin:0 0;color:#222;">UNKNOWN</span>
<span class="t" style="left:288.8px;top:162px;font-size:6.7px;transform:scaleX(0.922);transform-origin:0 0;color:#222;">ROX-None</span>
<div class="a" style="left:0px;top:168.84px;width:426px;height:9.43px;background:#dfe3ef"></div>
<div class="a" style="left:0px;top:168.84px;width:14.8px;height:9.43px;background:#c3cde0"></div>
<span class="t" style="left:7.08px;top:171px;font-size:6.7px;transform:scaleX(0.955);transform-origin:0 0;color:#333;">61</span>
<span class="t" style="left:25.6px;top:171px;font-size:6.7px;transform:scaleX(0.955);transform-origin:0 0;color:#222;">D7</span>
<div class="a" style="left:70.6px;top:170.53px;width:6.2px;height:6.2px;background:#fff;border:0.6px solid #8a8a8a;border-radius:1.4px"></div>
<span class="t" style="left:167.6px;top:173px;font-size:5px;color:#555;">..</span>
<span class="t" style="left:172.2px;top:171px;font-size:6.7px;transform:scaleX(0.930);transform-origin:0 0;color:#222;">Mykoplasm...</span>
<span class="t" style="left:211.4px;top:171px;font-size:6.7px;transform:scaleX(0.963);transform-origin:0 0;color:#222;">45.0</span>
<span class="t" style="left:250.1px;top:171px;font-size:6.7px;transform:scaleX(0.953);transform-origin:0 0;color:#222;">UNKNOWN</span>
<span class="t" style="left:288.8px;top:171px;font-size:6.7px;transform:scaleX(0.943);transform-origin:0 0;color:#222;">FAM-None</span>
<div class="a" style="left:0px;top:178.22px;width:426px;height:9.43px;background:#ffffff"></div>
<div class="a" style="left:0px;top:178.22px;width:14.8px;height:9.43px;background:#c3cde0"></div>
<span class="t" style="left:7.08px;top:181px;font-size:6.7px;transform:scaleX(0.955);transform-origin:0 0;color:#333;">62</span>
<span class="t" style="left:25.6px;top:181px;font-size:6.7px;transform:scaleX(0.955);transform-origin:0 0;color:#222;">D7</span>
<div class="a" style="left:70.6px;top:179.91px;width:6.2px;height:6.2px;background:#fff;border:0.6px solid #8a8a8a;border-radius:1.4px"></div>
<span class="t" style="left:167.6px;top:182px;font-size:5px;color:#555;">..</span>
<span class="t" style="left:172.2px;top:181px;font-size:6.7px;transform:scaleX(0.976);transform-origin:0 0;color:#222;">PCR-Kontr...</span>
<span class="t" style="left:211.4px;top:181px;font-size:6.7px;transform:scaleX(0.963);transform-origin:0 0;color:#222;">45.0</span>
<span class="t" style="left:250.1px;top:181px;font-size:6.7px;transform:scaleX(0.953);transform-origin:0 0;color:#222;">UNKNOWN</span>
<span class="t" style="left:288.8px;top:181px;font-size:6.7px;transform:scaleX(0.922);transform-origin:0 0;color:#222;">ROX-None</span>
<div class="a" style="left:0px;top:187.6px;width:426px;height:9.43px;background:#dfe3ef"></div>
<div class="a" style="left:0px;top:187.6px;width:14.8px;height:9.43px;background:#c3cde0"></div>
<span class="t" style="left:7.08px;top:190px;font-size:6.7px;transform:scaleX(0.955);transform-origin:0 0;color:#333;">63</span>
<span class="t" style="left:25.6px;top:190px;font-size:6.7px;transform:scaleX(0.955);transform-origin:0 0;color:#222;">D8</span>
<div class="a" style="left:70.6px;top:189.29px;width:6.2px;height:6.2px;background:#fff;border:0.6px solid #8a8a8a;border-radius:1.4px"></div>
<span class="t" style="left:167.6px;top:191px;font-size:5px;color:#555;">..</span>
<span class="t" style="left:172.2px;top:190px;font-size:6.7px;transform:scaleX(0.930);transform-origin:0 0;color:#222;">Mykoplasm...</span>
<span class="t" style="left:211.4px;top:190px;font-size:6.7px;transform:scaleX(0.963);transform-origin:0 0;color:#222;">45.0</span>
<span class="t" style="left:250.1px;top:190px;font-size:6.7px;transform:scaleX(0.953);transform-origin:0 0;color:#222;">UNKNOWN</span>
<span class="t" style="left:288.8px;top:190px;font-size:6.7px;transform:scaleX(0.943);transform-origin:0 0;color:#222;">FAM-None</span>
<div class="a" style="left:0px;top:196.98px;width:426px;height:9.43px;background:#ffffff"></div>
<div class="a" style="left:0px;top:196.98px;width:14.8px;height:9.43px;background:#c3cde0"></div>
<span class="t" style="left:7.08px;top:199px;font-size:6.7px;transform:scaleX(0.955);transform-origin:0 0;color:#333;">64</span>
<span class="t" style="left:25.6px;top:199px;font-size:6.7px;transform:scaleX(0.955);transform-origin:0 0;color:#222;">D8</span>
<div class="a" style="left:70.6px;top:198.67px;width:6.2px;height:6.2px;background:#fff;border:0.6px solid #8a8a8a;border-radius:1.4px"></div>
<span class="t" style="left:167.6px;top:201px;font-size:5px;color:#555;">..</span>
<span class="t" style="left:172.2px;top:199px;font-size:6.7px;transform:scaleX(0.976);transform-origin:0 0;color:#222;">PCR-Kontr...</span>
<span class="t" style="left:211.4px;top:199px;font-size:6.7px;transform:scaleX(0.963);transform-origin:0 0;color:#222;">17.213097</span>
<span class="t" style="left:250.1px;top:199px;font-size:6.7px;transform:scaleX(0.953);transform-origin:0 0;color:#222;">UNKNOWN</span>
<span class="t" style="left:288.8px;top:199px;font-size:6.7px;transform:scaleX(0.922);transform-origin:0 0;color:#222;">ROX-None</span>
<div class="a" style="left:0px;top:206.36px;width:426px;height:9.43px;background:#bacdf6"></div>
<div class="a" style="left:0px;top:206.36px;width:14.8px;height:9.43px;background:#aebfe2"></div>
<span class="t" style="left:7.08px;top:209px;font-size:6.7px;transform:scaleX(0.955);transform-origin:0 0;color:#333;">65</span>
<span class="t" style="left:25.6px;top:209px;font-size:6.7px;transform:scaleX(0.955);transform-origin:0 0;color:#222;">E1</span>
<div class="a" style="left:70.6px;top:208.05px;width:6.2px;height:6.2px;background:#fff;border:0.6px solid #8a8a8a;border-radius:1.4px"></div>
<span class="t" style="left:133.2px;top:209px;font-size:6.7px;transform:scaleX(0.955);transform-origin:0 0;color:#222;">NK</span>
<span class="t" style="left:172.2px;top:209px;font-size:6.7px;transform:scaleX(0.930);transform-origin:0 0;color:#222;">Mykoplasm...</span>
<span class="t" style="left:211.4px;top:209px;font-size:6.7px;transform:scaleX(0.963);transform-origin:0 0;color:#222;">45.0</span>
<span class="t" style="left:250.1px;top:209px;font-size:6.7px;transform:scaleX(0.953);transform-origin:0 0;color:#222;">UNKNOWN</span>
<span class="t" style="left:288.8px;top:209px;font-size:6.7px;transform:scaleX(0.943);transform-origin:0 0;color:#222;">FAM-None</span>
<div class="a" style="left:0px;top:215.74px;width:426px;height:9.43px;background:#bacdf6"></div>
<div class="a" style="left:0px;top:215.74px;width:14.8px;height:9.43px;background:#aebfe2"></div>
<span class="t" style="left:7.08px;top:218px;font-size:6.7px;transform:scaleX(0.955);transform-origin:0 0;color:#333;">66</span>
<span class="t" style="left:25.6px;top:218px;font-size:6.7px;transform:scaleX(0.955);transform-origin:0 0;color:#222;">E1</span>
<div class="a" style="left:70.6px;top:217.43px;width:6.2px;height:6.2px;background:#fff;border:0.6px solid #8a8a8a;border-radius:1.4px"></div>
<span class="t" style="left:133.2px;top:218px;font-size:6.7px;transform:scaleX(0.955);transform-origin:0 0;color:#222;">NK</span>
<span class="t" style="left:172.2px;top:218px;font-size:6.7px;transform:scaleX(0.976);transform-origin:0 0;color:#222;">PCR-Kontr...</span>
<span class="t" style="left:211.4px;top:218px;font-size:6.7px;transform:scaleX(0.963);transform-origin:0 0;color:#222;">12.327925</span>
<span class="t" style="left:250.1px;top:218px;font-size:6.7px;transform:scaleX(0.953);transform-origin:0 0;color:#222;">UNKNOWN</span>
<span class="t" style="left:288.8px;top:218px;font-size:6.7px;transform:scaleX(0.922);transform-origin:0 0;color:#222;">ROX-None</span>
<div class="a" style="left:0px;top:225.12px;width:426px;height:9.43px;background:#bacdf6"></div>
<div class="a" style="left:0px;top:225.12px;width:14.8px;height:9.43px;background:#aebfe2"></div>
<span class="t" style="left:7.08px;top:227px;font-size:6.7px;transform:scaleX(0.955);transform-origin:0 0;color:#333;">67</span>
<span class="t" style="left:25.6px;top:227px;font-size:6.7px;transform:scaleX(0.955);transform-origin:0 0;color:#222;">E2</span>
<div class="a" style="left:70.6px;top:226.81px;width:6.2px;height:6.2px;background:#fff;border:0.6px solid #8a8a8a;border-radius:1.4px"></div>
<span class="t" style="left:133.2px;top:227px;font-size:6.7px;transform:scaleX(0.955);transform-origin:0 0;color:#222;">NK</span>
<span class="t" style="left:172.2px;top:227px;font-size:6.7px;transform:scaleX(0.930);transform-origin:0 0;color:#222;">Mykoplasm...</span>
<span class="t" style="left:211.4px;top:227px;font-size:6.7px;transform:scaleX(0.963);transform-origin:0 0;color:#222;">45.0</span>
<span class="t" style="left:250.1px;top:227px;font-size:6.7px;transform:scaleX(0.953);transform-origin:0 0;color:#222;">UNKNOWN</span>
<span class="t" style="left:288.8px;top:227px;font-size:6.7px;transform:scaleX(0.943);transform-origin:0 0;color:#222;">FAM-None</span>
<div class="a" style="left:0px;top:234.5px;width:426px;height:9.43px;background:#bacdf6"></div>
<div class="a" style="left:0px;top:234.5px;width:14.8px;height:9.43px;background:#aebfe2"></div>
<span class="t" style="left:7.08px;top:237px;font-size:6.7px;transform:scaleX(0.955);transform-origin:0 0;color:#333;">68</span>
<span class="t" style="left:25.6px;top:237px;font-size:6.7px;transform:scaleX(0.955);transform-origin:0 0;color:#222;">E2</span>
<div class="a" style="left:70.6px;top:236.19px;width:6.2px;height:6.2px;background:#fff;border:0.6px solid #8a8a8a;border-radius:1.4px"></div>
<span class="t" style="left:133.2px;top:237px;font-size:6.7px;transform:scaleX(0.955);transform-origin:0 0;color:#222;">NK</span>
<span class="t" style="left:172.2px;top:237px;font-size:6.7px;transform:scaleX(0.976);transform-origin:0 0;color:#222;">PCR-Kontr...</span>
<span class="t" style="left:211.4px;top:237px;font-size:6.7px;transform:scaleX(0.963);transform-origin:0 0;color:#222;">15.371644</span>
<span class="t" style="left:250.1px;top:237px;font-size:6.7px;transform:scaleX(0.953);transform-origin:0 0;color:#222;">UNKNOWN</span>
<span class="t" style="left:288.8px;top:237px;font-size:6.7px;transform:scaleX(0.922);transform-origin:0 0;color:#222;">ROX-None</span>
<div class="a" style="left:0px;top:243.88px;width:426px;height:9.43px;background:#dfe3ef"></div>
<div class="a" style="left:0px;top:243.88px;width:14.8px;height:9.43px;background:#c3cde0"></div>
<span class="t" style="left:7.08px;top:246px;font-size:6.7px;transform:scaleX(0.955);transform-origin:0 0;color:#333;">69</span>
<span class="t" style="left:25.6px;top:246px;font-size:6.7px;transform:scaleX(0.955);transform-origin:0 0;color:#222;">E3</span>
<div class="a" style="left:70.6px;top:245.57px;width:6.2px;height:6.2px;background:#fff;border:0.6px solid #8a8a8a;border-radius:1.4px"></div>
<span class="t" style="left:167.6px;top:248px;font-size:5px;color:#555;">..</span>
<span class="t" style="left:172.2px;top:246px;font-size:6.7px;transform:scaleX(0.930);transform-origin:0 0;color:#222;">Mykoplasm...</span>
<span class="t" style="left:211.4px;top:246px;font-size:6.7px;transform:scaleX(0.963);transform-origin:0 0;color:#222;">45.0</span>
<span class="t" style="left:250.1px;top:246px;font-size:6.7px;transform:scaleX(0.953);transform-origin:0 0;color:#222;">UNKNOWN</span>
<span class="t" style="left:288.8px;top:246px;font-size:6.7px;transform:scaleX(0.943);transform-origin:0 0;color:#222;">FAM-None</span>
<div class="a" style="left:0px;top:253.26px;width:426px;height:9.43px;background:#ffffff"></div>
<div class="a" style="left:0px;top:253.26px;width:14.8px;height:9.43px;background:#c3cde0"></div>
<span class="t" style="left:7.08px;top:256px;font-size:6.7px;transform:scaleX(0.955);transform-origin:0 0;color:#333;">70</span>
<span class="t" style="left:25.6px;top:256px;font-size:6.7px;transform:scaleX(0.955);transform-origin:0 0;color:#222;">E3</span>
<div class="a" style="left:70.6px;top:254.95px;width:6.2px;height:6.2px;background:#fff;border:0.6px solid #8a8a8a;border-radius:1.4px"></div>
<span class="t" style="left:167.6px;top:257px;font-size:5px;color:#555;">..</span>
<span class="t" style="left:172.2px;top:256px;font-size:6.7px;transform:scaleX(0.976);transform-origin:0 0;color:#222;">PCR-Kontr...</span>
<span class="t" style="left:211.4px;top:256px;font-size:6.7px;transform:scaleX(0.963);transform-origin:0 0;color:#222;">14.774211</span>
<span class="t" style="left:250.1px;top:256px;font-size:6.7px;transform:scaleX(0.953);transform-origin:0 0;color:#222;">UNKNOWN</span>
<span class="t" style="left:288.8px;top:256px;font-size:6.7px;transform:scaleX(0.922);transform-origin:0 0;color:#222;">ROX-None</span>
<div class="a" style="left:0px;top:262.64px;width:426px;height:9.43px;background:#dfe3ef"></div>
<div class="a" style="left:0px;top:262.64px;width:14.8px;height:9.43px;background:#c3cde0"></div>
<span class="t" style="left:7.08px;top:265px;font-size:6.7px;transform:scaleX(0.955);transform-origin:0 0;color:#333;">71</span>
<span class="t" style="left:25.6px;top:265px;font-size:6.7px;transform:scaleX(0.955);transform-origin:0 0;color:#222;">E4</span>
<div class="a" style="left:70.6px;top:264.33px;width:6.2px;height:6.2px;background:#fff;border:0.6px solid #8a8a8a;border-radius:1.4px"></div>
<span class="t" style="left:167.6px;top:266px;font-size:5px;color:#555;">..</span>
<span class="t" style="left:172.2px;top:265px;font-size:6.7px;transform:scaleX(0.930);transform-origin:0 0;color:#222;">Mykoplasm...</span>
<span class="t" style="left:211.4px;top:265px;font-size:6.7px;transform:scaleX(0.963);transform-origin:0 0;color:#222;">45.0</span>
<span class="t" style="left:250.1px;top:265px;font-size:6.7px;transform:scaleX(0.953);transform-origin:0 0;color:#222;">UNKNOWN</span>
<span class="t" style="left:288.8px;top:265px;font-size:6.7px;transform:scaleX(0.943);transform-origin:0 0;color:#222;">FAM-None</span>
<div class="a" style="left:0px;top:272.02px;width:426px;height:9.43px;background:#ffffff"></div>
<div class="a" style="left:0px;top:272.02px;width:14.8px;height:9.43px;background:#c3cde0"></div>
<span class="t" style="left:7.08px;top:274px;font-size:6.7px;transform:scaleX(0.955);transform-origin:0 0;color:#333;">72</span>
<span class="t" style="left:25.6px;top:274px;font-size:6.7px;transform:scaleX(0.955);transform-origin:0 0;color:#222;">E4</span>
<div class="a" style="left:70.6px;top:273.71px;width:6.2px;height:6.2px;background:#fff;border:0.6px solid #8a8a8a;border-radius:1.4px"></div>
<span class="t" style="left:167.6px;top:276px;font-size:5px;color:#555;">..</span>
<span class="t" style="left:172.2px;top:274px;font-size:6.7px;transform:scaleX(0.976);transform-origin:0 0;color:#222;">PCR-Kontr...</span>
<span class="t" style="left:211.4px;top:274px;font-size:6.7px;transform:scaleX(0.963);transform-origin:0 0;color:#222;">10.413968</span>
<span class="t" style="left:250.1px;top:274px;font-size:6.7px;transform:scaleX(0.953);transform-origin:0 0;color:#222;">UNKNOWN</span>
<span class="t" style="left:288.8px;top:274px;font-size:6.7px;transform:scaleX(0.922);transform-origin:0 0;color:#222;">ROX-None</span>
<div class="a" style="left:0px;top:281.4px;width:426px;height:9.43px;background:#dfe3ef"></div>
<div class="a" style="left:0px;top:281.4px;width:14.8px;height:9.43px;background:#c3cde0"></div>
<span class="t" style="left:7.08px;top:284px;font-size:6.7px;transform:scaleX(0.955);transform-origin:0 0;color:#333;">73</span>
<span class="t" style="left:25.6px;top:284px;font-size:6.7px;transform:scaleX(0.955);transform-origin:0 0;color:#222;">E5</span>
<div class="a" style="left:70.6px;top:283.09px;width:6.2px;height:6.2px;background:#fff;border:0.6px solid #8a8a8a;border-radius:1.4px"></div>
<span class="t" style="left:167.6px;top:285px;font-size:5px;color:#555;">..</span>
<span class="t" style="left:172.2px;top:284px;font-size:6.7px;transform:scaleX(0.930);transform-origin:0 0;color:#222;">Mykoplasm...</span>
<span class="t" style="left:211.4px;top:284px;font-size:6.7px;transform:scaleX(0.963);transform-origin:0 0;color:#222;">45.0</span>
<span class="t" style="left:250.1px;top:284px;font-size:6.7px;transform:scaleX(0.953);transform-origin:0 0;color:#222;">UNKNOWN</span>
<span class="t" style="left:288.8px;top:284px;font-size:6.7px;transform:scaleX(0.943);transform-origin:0 0;color:#222;">FAM-None</span>
<div class="a" style="left:0px;top:290.78px;width:426px;height:9.43px;background:#ffffff"></div>
<div class="a" style="left:0px;top:290.78px;width:14.8px;height:9.43px;background:#c3cde0"></div>
<span class="t" style="left:7.08px;top:293px;font-size:6.7px;transform:scaleX(0.955);transform-origin:0 0;color:#333;">74</span>
<span class="t" style="left:25.6px;top:293px;font-size:6.7px;transform:scaleX(0.955);transform-origin:0 0;color:#222;">E5</span>
<div class="a" style="left:70.6px;top:292.47px;width:6.2px;height:6.2px;background:#fff;border:0.6px solid #8a8a8a;border-radius:1.4px"></div>
<span class="t" style="left:167.6px;top:295px;font-size:5px;color:#555;">..</span>
<span class="t" style="left:172.2px;top:293px;font-size:6.7px;transform:scaleX(0.976);transform-origin:0 0;color:#222;">PCR-Kontr...</span>
<span class="t" style="left:211.4px;top:293px;font-size:6.7px;transform:scaleX(0.963);transform-origin:0 0;color:#222;">45.0</span>
<span class="t" style="left:250.1px;top:293px;font-size:6.7px;transform:scaleX(0.953);transform-origin:0 0;color:#222;">UNKNOWN</span>
<span class="t" style="left:288.8px;top:293px;font-size:6.7px;transform:scaleX(0.922);transform-origin:0 0;color:#222;">ROX-None</span>
<div class="a" style="left:0px;top:300.16px;width:426px;height:9.43px;background:#dfe3ef"></div>
<div class="a" style="left:0px;top:300.16px;width:14.8px;height:9.43px;background:#c3cde0"></div>
<span class="t" style="left:7.08px;top:302px;font-size:6.7px;transform:scaleX(0.955);transform-origin:0 0;color:#333;">75</span>
<span class="t" style="left:25.6px;top:302px;font-size:6.7px;transform:scaleX(0.955);transform-origin:0 0;color:#222;">E6</span>
<div class="a" style="left:70.6px;top:301.85px;width:6.2px;height:6.2px;background:#fff;border:0.6px solid #8a8a8a;border-radius:1.4px"></div>
<span class="t" style="left:167.6px;top:304px;font-size:5px;color:#555;">..</span>
<span class="t" style="left:172.2px;top:302px;font-size:6.7px;transform:scaleX(0.930);transform-origin:0 0;color:#222;">Mykoplasm...</span>
<span class="t" style="left:211.4px;top:302px;font-size:6.7px;transform:scaleX(0.963);transform-origin:0 0;color:#222;">45.0</span>
<span class="t" style="left:250.1px;top:302px;font-size:6.7px;transform:scaleX(0.953);transform-origin:0 0;color:#222;">UNKNOWN</span>
<span class="t" style="left:288.8px;top:302px;font-size:6.7px;transform:scaleX(0.943);transform-origin:0 0;color:#222;">FAM-None</span>
<div class="a" style="left:0px;top:309.54px;width:426px;height:9.43px;background:#ffffff"></div>
<div class="a" style="left:0px;top:309.54px;width:14.8px;height:9.43px;background:#c3cde0"></div>
<span class="t" style="left:7.08px;top:312px;font-size:6.7px;transform:scaleX(0.955);transform-origin:0 0;color:#333;">76</span>
<span class="t" style="left:25.6px;top:312px;font-size:6.7px;transform:scaleX(0.955);transform-origin:0 0;color:#222;">E6</span>
<div class="a" style="left:70.6px;top:311.23px;width:6.2px;height:6.2px;background:#fff;border:0.6px solid #8a8a8a;border-radius:1.4px"></div>
<span class="t" style="left:167.6px;top:313px;font-size:5px;color:#555;">..</span>
<span class="t" style="left:172.2px;top:312px;font-size:6.7px;transform:scaleX(0.976);transform-origin:0 0;color:#222;">PCR-Kontr...</span>
<span class="t" style="left:211.4px;top:312px;font-size:6.7px;transform:scaleX(0.963);transform-origin:0 0;color:#222;">45.0</span>
<span class="t" style="left:250.1px;top:312px;font-size:6.7px;transform:scaleX(0.953);transform-origin:0 0;color:#222;">UNKNOWN</span>
<span class="t" style="left:288.8px;top:312px;font-size:6.7px;transform:scaleX(0.922);transform-origin:0 0;color:#222;">ROX-None</span>
<div class="a" style="left:0px;top:318.92px;width:426px;height:9.43px;background:#dfe3ef"></div>
<div class="a" style="left:0px;top:318.92px;width:14.8px;height:9.43px;background:#c3cde0"></div>
<span class="t" style="left:7.08px;top:321px;font-size:6.7px;transform:scaleX(0.955);transform-origin:0 0;color:#333;">77</span>
<span class="t" style="left:25.6px;top:321px;font-size:6.7px;transform:scaleX(0.955);transform-origin:0 0;color:#222;">E7</span>
<div class="a" style="left:70.6px;top:320.61px;width:6.2px;height:6.2px;background:#fff;border:0.6px solid #8a8a8a;border-radius:1.4px"></div>
<span class="t" style="left:167.6px;top:323px;font-size:5px;color:#555;">..</span>
<span class="t" style="left:172.2px;top:321px;font-size:6.7px;transform:scaleX(0.930);transform-origin:0 0;color:#222;">Mykoplasm...</span>
<span class="t" style="left:211.4px;top:321px;font-size:6.7px;transform:scaleX(0.963);transform-origin:0 0;color:#222;">45.0</span>
<span class="t" style="left:250.1px;top:321px;font-size:6.7px;transform:scaleX(0.953);transform-origin:0 0;color:#222;">UNKNOWN</span>
<span class="t" style="left:288.8px;top:321px;font-size:6.7px;transform:scaleX(0.943);transform-origin:0 0;color:#222;">FAM-None</span>
<div class="a" style="left:0px;top:328.3px;width:426px;height:9.43px;background:#ffffff"></div>
<div class="a" style="left:0px;top:328.3px;width:14.8px;height:9.43px;background:#c3cde0"></div>
<span class="t" style="left:7.08px;top:331px;font-size:6.7px;transform:scaleX(0.955);transform-origin:0 0;color:#333;">78</span>
<span class="t" style="left:25.6px;top:331px;font-size:6.7px;transform:scaleX(0.955);transform-origin:0 0;color:#222;">E7</span>
<div class="a" style="left:70.6px;top:329.99px;width:6.2px;height:6.2px;background:#fff;border:0.6px solid #8a8a8a;border-radius:1.4px"></div>
<span class="t" style="left:167.6px;top:332px;font-size:5px;color:#555;">..</span>
<span class="t" style="left:172.2px;top:331px;font-size:6.7px;transform:scaleX(0.976);transform-origin:0 0;color:#222;">PCR-Kontr...</span>
<span class="t" style="left:211.4px;top:331px;font-size:6.7px;transform:scaleX(0.963);transform-origin:0 0;color:#222;">45.0</span>
<span class="t" style="left:250.1px;top:331px;font-size:6.7px;transform:scaleX(0.953);transform-origin:0 0;color:#222;">UNKNOWN</span>
<span class="t" style="left:288.8px;top:331px;font-size:6.7px;transform:scaleX(0.922);transform-origin:0 0;color:#222;">ROX-None</span>
<span class="t" style="left:133.2px;top:96px;font-size:6.7px;transform:scaleX(0.784);transform-origin:0 0;color:#444;">P-ELM000 KT</span>
<span class="t" style="left:133.2px;top:246px;font-size:6.7px;transform:scaleX(0.737);transform-origin:0 0;color:#444;">P-ELM000 KT</span>
<div class="a" style="left:100.6px;top:1.6px;width:66.6px;height:53.8px;background:#fff"></div>
<div class="a" style="left:107.4px;top:98.2px;width:60.5px;height:108px;background:#fff"></div>
<div class="a" style="left:99px;top:247.1px;width:67.2px;height:87.3px;background:#fff"></div>
<div class="a" style="left:108.8px;top:54px;width:7.4px;height:1px;background:#f6edcc"></div>
<div class="a" style="left:111.8px;top:55px;width:1.2px;height:3.4px;background:#f5e3a4"></div>
<div class="a" style="left:426.2px;top:0px;width:9.4px;height:334.4px;background:#f1f1f1"></div>
<div class="a" style="left:430.4px;top:146.6px;width:2.1px;height:117.2px;background:#9c9c9c;border-radius:1px"></div>
</div>
<div class="a" style="left:557.8px;top:483.4px;width:435.6px;height:8.4px;background:#f1f1f1"></div>
<div class="a" style="left:571.6px;top:487.2px;width:285.8px;height:1.6px;background:#a4a4a4;border-radius:0.8px"></div>
</div></body></html>
